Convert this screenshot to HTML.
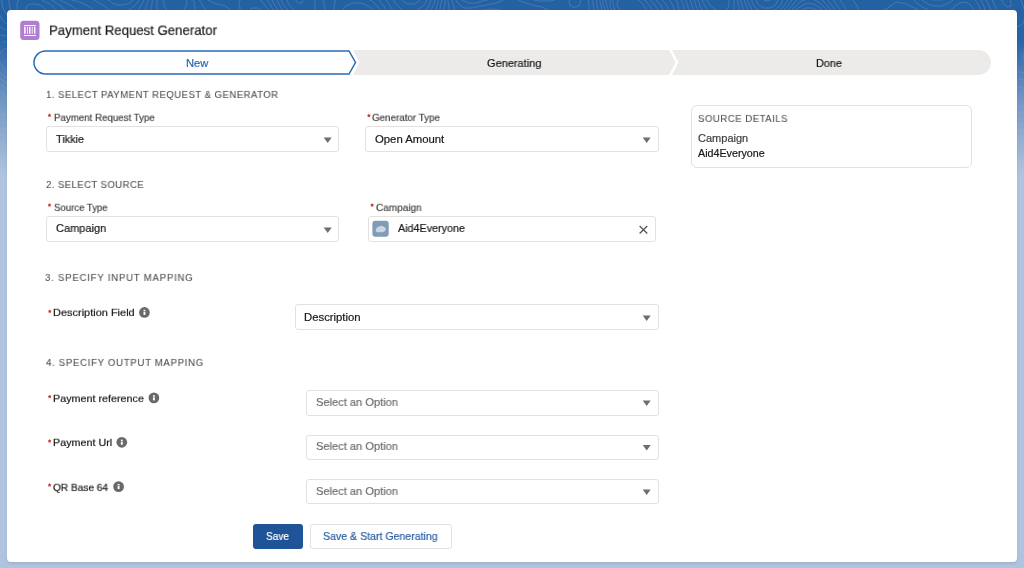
<!DOCTYPE html>
<html><head><meta charset="utf-8">
<style>
html,body{margin:0;padding:0;width:1024px;height:568px;overflow:hidden}
body{position:relative;font-family:"Liberation Sans",sans-serif;color:#181818;
background:linear-gradient(to bottom,#2461a3 0px,#2864a6 40px,#7196c4 100px,#b0c4df 175px,#b0c4df 568px);}
.t{position:absolute;white-space:nowrap;line-height:1;will-change:transform;-webkit-text-stroke:0.2px currentColor}
#card{position:absolute;left:7px;top:10px;width:1010px;height:552.3px;background:#fff;border-radius:4px;box-shadow:0 1.5px 2.5px rgba(0,0,0,.09)}
.box{position:absolute;border:1px solid #e2e1e0;border-radius:3px;background:#fff;box-sizing:border-box}
svg.i{position:absolute;overflow:visible}

</style></head><body>
<svg class="i" style="left:0;top:0" width="1024" height="200"><defs><linearGradient id="fadeg" x1="0" y1="0" x2="0" y2="1"><stop offset="0" stop-color="#fff" stop-opacity="1"/><stop offset="0.5" stop-color="#fff" stop-opacity="0.5"/><stop offset="1" stop-color="#fff" stop-opacity="0"/></linearGradient><mask id="fadem"><rect width="1024" height="200" fill="url(#fadeg)"/></mask></defs><g mask="url(#fadem)" fill="none" stroke="#fff" stroke-opacity="0.22" stroke-width="0.7"><path d="M805 36 L808 34 L810 32 L812 30 L812 28 L812 26 L810 23 L806 22 L802 24 L800 25 L798 27 L796 29 L794 32 L793 34 L794 37 L798 38 L802 37 L805 36"/><path d="M123 64 L122 62 L118 61 L118 64 L120 65 L123 64"/><path d="M794 144 L797 142 L798 140 L799 136 L799 132 L798 129 L796 126 L795 124 L793 122 L791 120 L788 118 L786 117 L782 116 L780 116 L776 116 L774 117 L772 118 L770 122 L770 124 L770 126 L771 130 L772 132 L774 136 L775 138 L777 140 L779 142 L782 144 L784 145 L788 146 L792 145 L794 144"/><path d="M791 46 L794 45 L797 44 L800 43 L803 42 L806 41 L808 40 L811 38 L814 36 L816 34 L817 32 L818 30 L819 26 L818 24 L816 20 L814 18 L812 17 L808 16 L804 17 L802 18 L799 20 L796 22 L794 24 L792 26 L790 28 L788 30 L786 32 L784 34 L782 36 L780 38 L778 40 L777 42 L776 44 L776 46 L780 47 L784 47 L788 47 L791 46"/><path d="M131 72 L132 70 L133 66 L132 62 L131 60 L130 58 L128 56 L124 54 L122 54 L118 53 L114 53 L110 53 L106 54 L104 55 L102 56 L101 60 L102 63 L104 65 L106 66 L109 68 L112 70 L114 70 L118 72 L120 72 L124 73 L128 73 L131 72"/><path d="M451 72 L454 70 L454 68 L454 65 L452 62 L450 61 L446 62 L445 64 L444 68 L446 71 L448 72 L451 72"/><path d="M793 150 L796 148 L798 147 L800 144 L801 142 L802 140 L803 136 L802 132 L802 130 L800 126 L799 124 L797 122 L796 120 L793 118 L790 116 L788 115 L786 114 L782 112 L780 112 L776 111 L772 112 L770 113 L768 115 L766 118 L766 120 L765 124 L766 127 L767 130 L768 133 L770 136 L771 138 L772 140 L774 142 L776 144 L778 146 L781 148 L784 150 L786 150 L790 151 L793 150"/><path d="M776 56 L778 55 L782 54 L784 54 L788 52 L790 51 L793 50 L796 49 L798 48 L802 46 L804 45 L807 44 L810 43 L812 42 L815 40 L818 38 L820 36 L821 34 L822 32 L823 28 L823 24 L822 22 L820 18 L818 16 L816 14 L814 13 L811 12 L808 12 L806 12 L802 14 L800 15 L798 16 L796 18 L793 20 L791 22 L789 24 L786 26 L784 28 L782 30 L780 31 L778 32 L776 34 L773 36 L770 38 L768 39 L766 40 L764 42 L762 44 L760 48 L761 52 L763 54 L766 55 L768 56 L772 56 L776 56"/><path d="M135 76 L137 74 L138 70 L138 68 L138 66 L137 62 L136 60 L134 56 L132 54 L130 52 L128 51 L125 50 L122 49 L118 49 L114 48 L110 48 L106 48 L102 49 L98 50 L96 50 L92 52 L90 54 L89 56 L89 60 L90 62 L92 64 L95 66 L98 68 L100 69 L103 70 L106 71 L108 72 L112 74 L114 75 L118 76 L120 77 L124 77 L128 78 L132 77 L135 76"/><path d="M455 80 L458 78 L459 76 L461 74 L462 70 L462 66 L461 62 L460 60 L458 57 L456 55 L454 53 L452 52 L448 51 L445 52 L442 54 L440 56 L439 58 L438 60 L437 64 L437 68 L437 72 L438 74 L440 77 L442 79 L444 80 L448 81 L452 81 L455 80"/><path d="M238 108 L242 107 L244 106 L247 104 L249 102 L250 100 L251 96 L250 94 L248 91 L246 90 L242 89 L240 90 L236 92 L234 93 L232 96 L231 98 L230 102 L232 106 L234 108 L236 108 L238 108"/><path d="M795 154 L798 152 L800 150 L802 148 L803 146 L804 144 L805 140 L806 136 L805 132 L804 128 L803 126 L802 123 L800 121 L798 119 L796 117 L794 115 L792 114 L789 112 L786 110 L784 109 L780 108 L778 107 L774 107 L770 108 L768 108 L766 110 L764 112 L762 115 L761 118 L761 122 L762 126 L762 128 L764 132 L765 134 L766 136 L768 140 L769 142 L771 144 L773 146 L774 148 L777 150 L780 152 L782 153 L784 154 L788 155 L792 155 L795 154"/><path d="M480 188 L484 186 L486 185 L488 182 L489 180 L490 176 L489 172 L488 170 L486 168 L482 166 L478 167 L475 168 L472 170 L470 172 L469 174 L468 176 L467 180 L468 184 L470 186 L472 188 L474 188 L478 188 L480 188"/><path d="M706 -4 L707 0 L708 2 L710 5 L712 7 L714 9 L716 10 L720 11 L724 11 L726 10 L728 8 L729 4 L729 0 L728 -2"/><path d="M773 62 L776 61 L780 60 L782 59 L785 58 L788 56 L790 56 L793 54 L796 53 L798 52 L801 50 L804 49 L806 48 L810 46 L812 45 L815 44 L818 42 L820 41 L822 39 L824 37 L826 34 L827 32 L827 28 L826 24 L826 22 L824 18 L823 16 L821 14 L819 12 L817 10 L814 9 L812 8 L808 8 L806 8 L802 10 L800 11 L798 12 L796 14 L793 16 L791 18 L789 20 L786 22 L784 24 L782 25 L780 27 L778 28 L775 30 L772 31 L770 32 L766 34 L764 35 L762 36 L758 38 L756 39 L754 41 L752 44 L752 46 L752 50 L752 52 L754 56 L756 58 L758 59 L760 60 L764 62 L766 62 L770 62 L773 62"/><path d="M138 80 L140 78 L141 76 L142 72 L142 68 L141 64 L140 61 L139 58 L138 56 L136 53 L134 51 L132 49 L130 48 L126 46 L124 46 L120 45 L116 45 L112 44 L108 44 L104 44 L100 44 L96 45 L92 46 L90 46 L86 48 L84 49 L82 50 L80 52 L78 54 L77 58 L78 62 L79 64 L82 66 L84 67 L86 68 L90 69 L92 70 L96 72 L98 72 L102 74 L104 74 L108 76 L110 77 L114 78 L116 79 L120 80 L122 80 L126 81 L130 82 L134 82 L138 80"/><path d="M453 86 L456 85 L458 84 L461 82 L463 80 L464 78 L466 74 L466 72 L467 68 L466 64 L465 62 L464 58 L463 56 L462 54 L460 51 L458 49 L456 47 L453 46 L450 45 L446 46 L444 46 L441 48 L438 50 L437 52 L435 54 L434 57 L433 60 L432 64 L432 66 L432 70 L432 73 L433 76 L434 78 L436 81 L438 83 L440 84 L444 86 L446 86 L450 87 L453 86"/><path d="M22 70 L25 68 L25 64 L24 62 L22 60 L20 58 L16 56 L12 56 L10 58 L9 62 L10 64 L12 66 L14 68 L18 70 L20 70 L22 70"/><path d="M239 114 L242 113 L245 112 L248 111 L250 110 L252 108 L254 106 L256 103 L257 100 L257 96 L256 92 L255 90 L254 88 L252 86 L248 84 L246 84 L244 84 L240 85 L237 86 L234 88 L232 89 L230 91 L228 93 L226 96 L225 98 L225 102 L225 106 L226 110 L227 112 L230 114 L232 114 L236 114 L239 114"/><path d="M796 158 L799 156 L802 154 L803 152 L805 150 L806 148 L808 144 L808 142 L809 138 L809 134 L808 131 L807 128 L806 125 L804 122 L803 120 L801 118 L799 116 L797 114 L794 112 L792 111 L790 109 L787 108 L784 106 L782 105 L778 104 L776 103 L772 103 L768 103 L766 104 L763 106 L761 108 L759 110 L758 113 L757 116 L757 120 L758 124 L758 126 L759 130 L760 132 L762 136 L763 138 L764 140 L766 143 L768 146 L770 148 L771 150 L773 152 L776 154 L778 156 L780 157 L782 158 L786 159 L790 159 L794 159 L796 158"/><path d="M46 160 L48 158 L47 154 L46 152 L44 150 L42 147 L40 145 L37 144 L34 144 L32 144 L29 146 L27 148 L27 152 L28 154 L30 156 L34 158 L36 159 L40 160 L42 160 L46 160"/><path d="M951 168 L954 167 L956 166 L958 164 L960 161 L961 158 L960 156 L958 152 L956 150 L954 149 L952 148 L948 147 L944 147 L942 149 L940 152 L940 154 L939 158 L940 162 L941 164 L942 166 L945 168 L948 168 L951 168"/><path d="M484 192 L488 190 L490 188 L492 186 L493 184 L494 180 L494 178 L494 174 L494 172 L493 168 L492 166 L490 164 L488 162 L484 161 L480 161 L477 162 L474 163 L472 165 L470 166 L468 168 L466 170 L464 172 L462 176 L462 178 L462 182 L462 184 L464 188 L465 190 L468 192 L470 193 L474 194 L478 194 L482 193 L484 192"/><path d="M726 194 L724 192 L722 190 L720 188 L718 187 L714 186 L712 186 L710 186 L708 188 L707 192"/><path d="M465 -4 L468 -2 L470 -2 L474 -2 L478 -2 L480 -2 L484 -3"/><path d="M701 -4 L702 -1 L703 2 L704 4 L706 8 L708 10 L710 12 L712 14 L714 15 L716 16 L720 17 L724 18 L728 17 L731 16 L733 14 L734 10 L734 8 L734 4 L734 2 L733 -2"/><path d="M776 66 L780 65 L782 64 L785 62 L788 60 L790 59 L792 58 L796 56 L798 55 L800 54 L804 52 L806 51 L808 50 L812 48 L814 48 L818 46 L820 45 L822 44 L825 42 L827 40 L829 38 L830 35 L831 32 L831 28 L830 24 L830 22 L828 18 L827 16 L825 14 L824 12 L822 10 L820 8 L817 6 L814 4 L812 4 L808 3 L805 4 L802 6 L800 7 L798 8 L796 10 L794 12 L792 14 L789 16 L787 18 L785 20 L782 22 L780 23 L778 25 L775 26 L772 28 L770 28 L766 30 L764 31 L760 32 L758 32 L754 34 L752 34 L749 36 L747 38 L746 40 L745 44 L745 48 L746 52 L746 54 L748 57 L750 60 L752 62 L754 63 L756 65 L759 66 L762 67 L766 68 L770 68 L774 67 L776 66"/><path d="M456 90 L458 89 L460 88 L463 86 L466 84 L467 82 L469 80 L470 77 L471 74 L471 70 L471 66 L470 63 L469 60 L468 57 L467 54 L466 52 L464 49 L462 47 L460 44 L458 43 L456 41 L452 40 L450 40 L448 40 L444 41 L442 42 L439 44 L437 46 L435 48 L433 50 L432 52 L430 56 L429 58 L428 62 L428 64 L427 68 L427 72 L428 76 L428 78 L430 82 L431 84 L432 86 L435 88 L438 90 L440 91 L444 91 L448 91 L452 91 L456 90"/><path d="M0 62 L2 66 L3 68 L5 70 L7 72 L10 74 L12 76 L14 77 L16 78 L20 80 L22 81 L25 82 L28 83 L32 84 L34 84 L38 85 L42 85 L44 84 L47 82 L49 80 L51 78 L52 76 L54 73 L56 71 L58 70 L62 70 L65 70 L68 70 L72 71 L76 71 L80 72 L82 72 L86 73 L90 74 L92 74 L96 75 L99 76 L102 77 L105 78 L108 79 L111 80 L114 81 L117 82 L120 83 L124 84 L126 85 L130 85 L134 86 L138 85 L140 84 L142 82 L144 78 L145 76 L145 72 L144 68 L144 65 L143 62 L142 58 L141 56 L140 53 L138 50 L136 48 L134 47 L132 45 L129 44 L126 43 L122 42 L120 42 L116 41 L112 41 L108 40 L104 40 L100 40 L96 40 L92 41 L88 41 L86 42 L82 43 L80 44 L76 46 L74 48 L72 49 L70 51 L68 53 L66 55 L64 57 L62 59 L60 62 L58 64 L56 66 L54 66 L51 66 L48 65 L46 64 L42 62 L40 61 L38 60 L35 58 L32 56 L30 55 L28 54 L25 52 L22 51 L20 50 L16 48 L14 48 L10 48 L7 48 L4 49 L2 51 L0 54"/><path d="M234 120 L236 120 L240 119 L244 118 L246 117 L250 116 L252 115 L255 114 L258 112 L260 110 L261 108 L262 105 L263 102 L263 98 L262 94 L261 92 L260 89 L259 86 L257 84 L255 82 L252 80 L250 80 L246 80 L243 80 L240 81 L237 82 L234 84 L232 85 L230 86 L228 88 L226 90 L224 93 L222 96 L221 98 L220 102 L220 106 L220 110 L221 114 L223 116 L224 118 L228 120 L230 120 L234 120"/><path d="M791 164 L794 164 L798 162 L800 161 L802 159 L804 157 L806 154 L807 152 L808 150 L810 146 L811 144 L811 140 L811 136 L811 132 L810 128 L809 126 L808 124 L806 120 L804 118 L802 116 L800 114 L798 112 L796 110 L794 109 L792 108 L789 106 L786 104 L784 103 L782 102 L778 100 L776 99 L772 99 L768 99 L764 100 L762 101 L760 102 L758 104 L756 107 L754 110 L754 112 L753 116 L753 120 L754 124 L754 126 L756 130 L757 132 L758 135 L759 138 L761 140 L762 143 L764 146 L765 148 L767 150 L768 152 L770 154 L772 156 L774 158 L777 160 L780 161 L782 162 L786 164 L789 164 L791 164"/><path d="M283 158 L286 156 L288 155 L290 153 L292 150 L292 148 L292 144 L292 140 L291 138 L290 134 L289 132 L287 130 L285 128 L282 127 L278 128 L276 128 L273 130 L272 132 L270 135 L269 138 L269 142 L269 146 L269 150 L270 153 L272 156 L274 158 L276 158 L280 159 L283 158"/><path d="M0 157 L4 157 L8 157 L12 158 L14 158 L18 160 L20 161 L22 162 L26 164 L28 164 L32 166 L34 167 L38 168 L40 169 L43 170 L46 171 L49 172 L52 173 L54 174 L58 176 L60 177 L63 178 L66 179 L70 180 L74 180 L78 180 L82 179 L84 178 L88 176 L90 175 L92 173 L94 170 L94 168 L94 165 L93 162 L91 160 L89 158 L86 157 L84 156 L80 155 L76 155 L72 155 L68 155 L65 154 L62 153 L60 152 L57 150 L55 148 L53 146 L51 144 L49 142 L48 140 L46 138 L44 136 L42 134 L38 133 L34 133 L31 134 L28 135 L26 136 L23 138 L20 140 L18 141 L16 142 L12 144 L10 144 L6 145 L3 144 L0 143"/><path d="M1038 142 L1036 141 L1034 140 L1030 138 L1028 138 L1024 137 L1020 137 L1017 138 L1015 140 L1013 142 L1012 144 L1011 148 L1011 152 L1012 155 L1014 157 L1016 158 L1020 159 L1024 159 L1028 159 L1032 159 L1035 158 L1038 157"/><path d="M953 174 L956 173 L958 172 L962 170 L964 169 L966 167 L968 164 L969 162 L968 158 L968 156 L966 153 L964 150 L962 148 L960 146 L958 145 L956 144 L953 142 L950 141 L946 140 L942 141 L939 142 L937 144 L936 146 L935 150 L934 153 L934 156 L934 160 L934 162 L935 166 L936 170 L937 172 L939 174 L942 175 L946 176 L950 175 L953 174"/><path d="M695 150 L697 148 L697 144 L694 143 L692 145 L692 148 L693 150 L695 150"/><path d="M654 158 L658 157 L660 154 L660 152 L659 150 L656 148 L654 147 L650 146 L646 147 L644 150 L646 154 L648 156 L650 157 L653 158 L654 158"/><path d="M490 194 L493 192 L495 190 L496 188 L498 184 L498 181 L498 178 L498 176 L497 172 L496 168 L496 166 L494 162 L493 160 L491 158 L488 156 L486 156 L483 156 L480 157 L476 158 L474 159 L472 160 L469 162 L466 164 L464 166 L462 168 L461 170 L459 172 L458 176 L458 178 L458 182 L458 184 L459 188 L460 190 L462 193"/><path d="M731 194 L730 192 L728 190 L726 187 L724 186 L722 184 L719 182 L716 180 L714 179 L710 178 L708 178 L705 178 L703 180 L702 182 L701 186 L701 190 L701 194"/><path d="M115 -4 L118 -2 L120 -2 L124 -2 L126 -3 L129 -4"/><path d="M459 -4 L460 -2 L462 0 L466 2 L468 3 L472 3 L476 3 L479 2 L482 1 L486 0 L488 -0 L492 -2 L494 -2 L496 -4"/><path d="M697 -4 L698 -0 L699 2 L700 6 L701 8 L702 10 L704 12 L706 14 L708 16 L711 18 L714 20 L716 21 L719 22 L722 23 L725 24 L728 25 L732 25 L736 26 L739 24 L739 20 L739 16 L739 12 L739 8 L738 4 L738 2 L737 -2"/><path d="M1000 -4 L1001 -2 L1002 1 L1004 4 L1006 6 L1008 7 L1011 6 L1011 2 L1010 -1 L1009 -4"/><path d="M774 72 L778 70 L780 69 L782 68 L785 66 L788 64 L790 63 L792 62 L795 60 L798 58 L800 57 L802 56 L806 54 L808 53 L811 52 L814 51 L816 50 L820 48 L822 47 L825 46 L828 44 L830 43 L832 40 L833 38 L834 36 L835 32 L835 28 L834 25 L833 22 L832 19 L830 16 L829 14 L828 12 L826 9 L824 7 L822 5 L820 3 L818 2 L815 0 L812 -1 L808 -1 L804 -0 L802 1 L800 2 L798 4 L796 6 L794 8 L792 10 L790 12 L788 14 L785 16 L783 18 L780 20 L778 21 L776 22 L773 24 L770 25 L767 26 L764 27 L760 27 L756 28 L752 28 L748 28 L744 28 L741 28 L740 30 L739 34 L739 38 L739 42 L739 46 L740 50 L740 52 L742 56 L743 58 L744 60 L746 62 L748 64 L750 66 L752 68 L755 70 L758 71 L760 72 L764 74 L768 74 L772 73 L774 72"/><path d="M450 96 L452 96 L456 94 L458 94 L462 92 L464 91 L466 89 L468 87 L470 85 L472 83 L474 80 L474 78 L475 74 L475 70 L475 66 L474 63 L473 60 L472 57 L471 54 L470 52 L468 48 L467 46 L465 44 L464 42 L462 40 L460 38 L457 36 L454 35 L450 35 L446 36 L444 36 L441 38 L438 40 L436 41 L434 43 L432 46 L430 48 L429 50 L428 52 L426 56 L426 58 L425 62 L424 65 L423 68 L423 72 L423 76 L423 80 L424 84 L424 86 L426 89 L428 92 L430 93 L432 94 L436 96 L438 96 L442 96 L446 96 L450 96"/><path d="M131 194 L132 192 L133 188 L133 184 L132 181 L130 179 L128 177 L126 176 L122 174 L120 174 L116 173 L114 172 L110 170 L108 168 L106 166 L105 164 L104 162 L102 159 L100 157 L98 155 L96 153 L94 152 L90 150 L88 150 L84 149 L80 149 L76 149 L72 149 L69 148 L66 147 L63 146 L60 144 L58 142 L56 140 L55 138 L54 136 L52 133 L51 130 L50 128 L48 124 L48 122 L47 118 L47 114 L48 111 L50 108 L51 106 L52 104 L54 101 L55 98 L56 96 L58 93 L59 90 L61 88 L62 86 L64 84 L66 82 L69 80 L72 79 L74 78 L78 77 L82 77 L86 77 L90 77 L94 78 L96 78 L100 79 L102 80 L106 81 L109 82 L112 83 L115 84 L118 85 L121 86 L124 87 L127 88 L130 89 L134 89 L138 90 L142 88 L144 87 L146 84 L147 82 L148 78 L148 74 L147 70 L147 66 L146 62 L145 60 L144 56 L144 54 L142 51 L140 48 L139 46 L136 44 L134 42 L132 41 L129 40 L126 39 L122 38 L120 38 L116 37 L112 37 L108 37 L104 36 L100 36 L96 36 L92 36 L88 37 L84 38 L82 38 L78 40 L76 41 L73 42 L70 44 L68 45 L66 46 L62 48 L60 49 L58 50 L54 52 L52 53 L48 53 L44 53 L40 52 L38 52 L34 50 L32 49 L29 48 L26 47 L24 46 L20 44 L18 44 L14 43 L11 42 L8 42 L4 42 L2 42"/><path d="M1038 44 L1036 46 L1034 49 L1033 52 L1032 56 L1032 60 L1034 64 L1035 66 L1036 68 L1038 70"/><path d="M0 72 L2 74 L4 76 L7 78 L9 80 L12 82 L14 83 L16 85 L18 86 L21 88 L24 90 L26 91 L28 93 L30 94 L32 96 L34 98 L36 100 L38 103 L40 106 L41 108 L42 112 L41 116 L39 118 L37 120 L34 122 L32 124 L30 125 L28 127 L26 128 L23 130 L20 132 L18 133 L16 134 L12 135 L8 136 L4 136 L0 135"/><path d="M280 164 L282 163 L286 162 L288 161 L290 160 L293 158 L295 156 L297 154 L298 152 L300 148 L300 144 L300 140 L299 136 L299 132 L300 128 L300 126 L302 123 L304 120 L305 118 L306 116 L307 112 L307 108 L305 106 L302 104 L299 104 L297 104 L294 105 L290 106 L288 107 L285 108 L282 109 L278 110 L274 108 L272 106 L271 104 L270 101 L269 98 L268 96 L266 92 L266 90 L264 87 L262 84 L261 82 L259 80 L257 78 L254 76 L252 76 L248 75 L244 76 L242 77 L239 78 L236 79 L234 80 L231 82 L228 84 L226 86 L224 88 L222 90 L221 92 L220 94 L218 98 L217 100 L217 104 L216 108 L216 112 L217 116 L218 120 L219 122 L221 124 L224 126 L228 126 L232 125 L236 125 L240 124 L242 124 L246 123 L250 122 L254 122 L258 123 L260 125 L262 128 L262 130 L262 134 L263 138 L263 142 L263 146 L264 150 L264 152 L266 156 L266 158 L268 160 L270 162 L274 164 L276 164 L280 164"/><path d="M797 168 L800 166 L802 165 L804 163 L806 160 L808 158 L809 156 L810 154 L812 150 L812 148 L813 144 L814 140 L814 136 L813 132 L813 128 L812 126 L810 122 L809 120 L807 118 L806 116 L804 114 L802 112 L799 110 L797 108 L794 106 L792 105 L790 103 L788 102 L785 100 L782 98 L780 97 L778 96 L774 94 L772 94 L768 93 L764 94 L762 95 L760 96 L758 98 L756 100 L754 102 L752 105 L750 108 L749 110 L748 114 L748 118 L749 122 L750 126 L751 128 L752 130 L754 134 L755 136 L756 139 L758 142 L759 144 L760 146 L762 150 L764 152 L765 154 L767 156 L768 158 L771 160 L773 162 L776 164 L778 165 L780 166 L784 168 L786 168 L790 169 L794 169 L797 168"/><path d="M735 194 L734 192 L732 189 L730 186 L728 184 L726 182 L724 181 L722 179 L720 178 L718 176 L715 174 L713 172 L711 170 L709 168 L708 166 L707 162 L707 158 L707 154 L707 150 L708 146 L708 144 L708 140 L708 137 L707 134 L706 132 L704 130 L700 128 L698 128 L695 128 L692 129 L690 130 L687 132 L684 134 L682 136 L680 138 L678 139 L676 140 L672 142 L668 142 L664 141 L661 140 L658 139 L654 138 L652 137 L648 136 L646 136 L642 135 L638 134 L634 135 L632 136 L630 140 L631 144 L632 147 L633 150 L634 152 L636 154 L638 157 L640 159 L642 161 L644 162 L647 164 L650 165 L654 166 L656 166 L658 166 L662 165 L666 164 L668 163 L672 162 L674 162 L678 161 L680 162 L684 163 L686 165 L688 166 L690 168 L692 170 L694 174 L694 176 L695 180 L696 184 L696 188 L696 190 L697 194"/><path d="M1038 134 L1036 133 L1032 132 L1030 131 L1026 130 L1024 130 L1020 130 L1018 130 L1014 132 L1012 133 L1010 135 L1008 137 L1006 140 L1005 142 L1004 146 L1003 148 L1002 152 L1002 154 L1001 158 L1000 161 L999 164 L998 166 L996 169 L994 171 L993 174 L993 178 L994 181 L995 184 L996 186 L997 190 L998 192"/><path d="M944 182 L948 181 L951 180 L954 179 L956 178 L960 177 L962 176 L966 174 L968 174 L972 172 L974 172 L977 170 L979 168 L980 164 L978 161 L976 158 L975 156 L973 154 L972 152 L970 150 L968 148 L966 146 L964 144 L961 142 L958 140 L956 139 L954 138 L950 136 L948 135 L944 135 L940 135 L937 136 L934 138 L933 140 L932 142 L931 146 L930 149 L930 152 L930 156 L930 160 L930 164 L930 166 L931 170 L932 174 L933 176 L934 179 L936 181 L939 182 L942 182 L944 182"/><path d="M499 194 L500 192 L501 188 L502 184 L502 180 L501 176 L501 172 L500 169 L499 166 L498 162 L497 160 L496 158 L494 155 L492 153 L490 152 L486 151 L482 152 L480 152 L476 154 L474 155 L472 156 L469 158 L466 160 L464 161 L462 163 L460 165 L458 167 L456 170 L455 172 L454 176 L454 180 L454 184 L455 188 L456 190 L458 194"/><path d="M0 165 L4 165 L8 165 L12 165 L15 166 L18 167 L22 168 L24 169 L28 170 L30 171 L34 172 L36 173 L39 174 L42 175 L44 176 L48 178 L50 178 L53 180 L56 181 L58 182 L62 183 L64 184 L68 185 L72 186 L76 186 L78 186 L80 186 L84 186 L88 185 L92 184 L95 184 L98 184 L100 184 L104 186 L106 188 L108 190 L110 192 L112 194"/><path d="M1008 194 L1006 190 L1006 188 L1005 184 L1004 181 L1004 178 L1004 176 L1006 172 L1008 171 L1010 170 L1014 169 L1017 168 L1020 167 L1024 167 L1027 166 L1030 166 L1034 165 L1038 165"/><path d="M103 -4 L105 -2 L108 0 L110 1 L112 3 L115 4 L118 5 L122 5 L126 4 L128 4 L131 2 L133 0 L135 -2 L136 -4"/><path d="M454 -4 L456 -0 L457 2 L459 4 L461 6 L464 8 L466 8 L470 8 L472 8 L476 7 L480 6 L482 6 L486 5 L490 4 L492 4 L496 3 L499 2 L502 1 L504 -1 L505 -4"/><path d="M693 -4 L694 -0 L695 2 L696 6 L697 8 L698 10 L700 14 L702 16 L704 18 L706 20 L708 21 L710 23 L712 24 L716 26 L718 27 L720 28 L724 30 L726 31 L728 33 L730 35 L732 38 L732 40 L733 44 L734 46 L735 50 L736 53 L737 56 L738 58 L740 61 L742 64 L744 66 L745 68 L747 70 L750 72 L752 74 L754 76 L756 78 L758 80 L760 82 L760 84 L760 86 L758 89 L756 92 L754 94 L752 96 L751 98 L749 100 L748 102 L746 105 L745 108 L744 110 L743 114 L743 118 L744 122 L745 124 L746 127 L747 130 L748 132 L750 135 L752 138 L753 140 L754 143 L756 146 L757 148 L758 150 L760 154 L761 156 L763 158 L765 160 L766 162 L769 164 L771 166 L774 168 L776 169 L778 170 L782 172 L784 173 L788 174 L790 175 L794 175 L798 175 L800 174 L803 172 L804 170 L806 168 L808 165 L810 162 L811 160 L812 157 L813 154 L814 152 L815 148 L816 144 L816 142 L816 138 L816 134 L816 132 L815 128 L814 125 L813 122 L812 120 L810 117 L808 115 L806 113 L804 111 L802 109 L800 107 L798 106 L795 104 L793 102 L790 100 L788 99 L786 97 L784 95 L782 94 L780 92 L778 90 L776 88 L774 85 L774 82 L775 80 L777 78 L779 76 L781 74 L783 72 L786 70 L788 68 L790 67 L792 65 L794 64 L797 62 L800 60 L802 59 L804 58 L808 56 L810 55 L813 54 L816 53 L818 52 L822 51 L824 50 L828 49 L830 48 L833 46 L835 44 L836 42 L838 38 L839 36 L839 32 L838 28 L838 26 L837 22 L836 20 L834 16 L833 14 L832 12 L830 9 L828 6 L826 4 L824 2 L822 0 L820 -2 L818 -3"/><path d="M800 -4 L798 -2 L797 0 L795 2 L793 4 L792 6 L790 8 L788 10 L786 12 L784 14 L781 16 L778 18 L776 19 L774 20 L770 22 L768 22 L764 23 L760 23 L756 23 L752 22 L750 21 L748 20 L746 17 L745 14 L744 12 L743 8 L742 5 L741 2 L740 -2 L740 -4"/><path d="M990 -4 L992 -1 L993 2 L994 4 L996 8 L997 10 L998 12 L1000 16 L1001 18 L1003 20 L1004 22 L1007 24 L1010 26 L1012 26 L1016 27 L1019 26 L1022 24 L1024 22 L1024 20 L1025 16 L1025 12 L1024 9 L1023 6 L1022 3 L1021 0 L1020 -2"/><path d="M533 26 L536 25 L538 22 L538 20 L538 18 L536 16 L533 14 L530 13 L526 13 L523 14 L522 18 L524 21 L526 24 L528 25 L531 26 L533 26"/><path d="M271 40 L273 38 L274 36 L274 32 L273 30 L272 28 L270 26 L268 24 L265 22 L262 21 L258 22 L257 24 L257 28 L258 32 L259 34 L260 37 L262 39 L264 40 L268 41 L271 40"/><path d="M443 102 L446 102 L450 101 L453 100 L456 99 L458 98 L462 96 L464 95 L466 94 L469 92 L471 90 L474 88 L475 86 L477 84 L478 82 L480 78 L480 76 L480 72 L480 70 L479 66 L478 62 L477 60 L476 56 L475 54 L474 51 L473 48 L472 46 L470 43 L468 40 L467 38 L465 36 L463 34 L461 32 L458 30 L456 29 L452 29 L448 30 L446 31 L443 32 L440 34 L438 35 L436 37 L434 38 L432 40 L430 43 L428 45 L426 48 L425 50 L424 53 L423 56 L422 59 L421 62 L420 66 L420 68 L419 72 L418 76 L418 78 L417 82 L417 86 L416 90 L416 92 L416 96 L415 100 L416 102 L420 103 L424 103 L428 103 L432 103 L436 103 L440 102 L443 102"/><path d="M137 194 L138 191 L139 188 L139 184 L138 180 L137 178 L136 176 L134 174 L132 172 L128 170 L126 169 L124 168 L120 166 L118 165 L116 164 L114 162 L112 160 L110 158 L108 156 L106 154 L104 152 L102 150 L99 148 L96 147 L94 146 L90 145 L86 144 L82 144 L80 144 L76 144 L72 143 L69 142 L66 141 L64 139 L62 137 L60 134 L59 132 L58 130 L57 126 L57 122 L57 118 L58 115 L59 112 L60 108 L60 106 L62 102 L62 100 L64 96 L65 94 L66 92 L68 89 L70 87 L72 85 L74 84 L78 82 L80 82 L84 81 L88 81 L92 81 L96 81 L99 82 L102 83 L106 84 L108 84 L112 86 L114 86 L118 88 L120 89 L124 90 L126 91 L130 92 L132 93 L136 94 L140 94 L144 93 L146 92 L148 90 L150 86 L150 84 L151 80 L150 76 L150 72 L150 70 L149 66 L148 62 L148 60 L147 56 L146 53 L145 50 L144 48 L142 45 L140 42 L138 40 L136 39 L134 38 L130 36 L128 36 L124 35 L121 34 L118 33 L114 33 L110 32 L106 32 L104 32 L100 32 L96 32 L92 32 L90 32 L86 33 L82 34 L80 34 L76 36 L74 36 L71 38 L68 39 L66 40 L63 42 L60 43 L58 44 L54 46 L52 46 L48 47 L44 47 L40 47 L37 46 L34 45 L31 44 L28 43 L25 42 L22 41 L20 40 L16 39 L14 38 L10 37 L6 36 L4 36 L0 35"/><path d="M1038 35 L1035 36 L1032 37 L1030 39 L1028 42 L1027 44 L1026 46 L1024 50 L1023 52 L1023 56 L1023 60 L1024 62 L1026 65 L1028 67 L1030 69 L1032 71 L1034 73 L1036 75 L1038 77"/><path d="M998 70 L1002 69 L1004 68 L1006 66 L1008 62 L1008 60 L1008 58 L1006 55 L1004 53 L1002 52 L998 51 L994 51 L992 52 L989 54 L987 56 L986 58 L985 62 L986 65 L988 67 L990 69 L994 70 L996 70 L998 70"/><path d="M280 168 L284 167 L287 166 L290 165 L292 164 L296 162 L298 161 L300 159 L302 157 L304 155 L306 152 L306 150 L307 146 L307 142 L306 138 L307 134 L307 130 L308 128 L310 124 L311 122 L312 120 L314 116 L314 114 L314 110 L314 108 L312 104 L310 102 L308 101 L306 100 L302 99 L298 98 L294 98 L290 99 L286 99 L282 99 L278 98 L276 97 L274 95 L272 92 L271 90 L269 88 L268 86 L266 82 L265 80 L263 78 L262 76 L260 74 L257 72 L254 71 L250 71 L246 72 L244 72 L240 74 L238 75 L236 76 L232 78 L230 79 L228 81 L226 82 L224 84 L222 86 L220 88 L218 91 L216 94 L215 96 L214 100 L214 102 L213 106 L213 110 L212 114 L212 118 L212 122 L212 126 L212 130 L214 133 L218 134 L222 133 L226 132 L228 132 L232 131 L236 130 L238 130 L242 129 L246 129 L250 130 L252 131 L254 132 L256 136 L257 138 L258 142 L258 144 L259 148 L260 152 L260 154 L261 158 L262 160 L264 163 L266 166 L268 167 L270 168 L274 169 L278 168 L280 168"/><path d="M0 78 L2 80 L5 82 L7 84 L10 86 L12 88 L14 90 L16 91 L18 93 L20 95 L22 97 L24 99 L26 102 L27 104 L28 107 L28 110 L28 114 L27 116 L26 118 L24 121 L22 123 L20 124 L18 126 L14 128 L12 128 L8 129 L4 129 L0 128"/><path d="M523 110 L525 108 L526 106 L527 102 L527 98 L526 94 L526 92 L524 88 L522 86 L520 85 L518 84 L514 83 L510 84 L508 85 L506 88 L505 90 L505 94 L506 98 L507 100 L508 103 L509 106 L511 108 L513 110 L516 112 L520 112 L523 110"/><path d="M398 118 L401 116 L404 114 L405 112 L406 110 L405 108 L402 108 L398 108 L396 109 L394 110 L392 114 L392 116 L393 118 L396 118 L398 118"/><path d="M739 194 L738 192 L736 188 L734 186 L733 184 L731 182 L729 180 L726 178 L724 176 L722 174 L720 172 L718 170 L716 168 L715 166 L714 164 L713 160 L713 156 L713 152 L713 148 L714 144 L714 142 L714 138 L714 134 L714 132 L713 128 L711 126 L709 124 L706 122 L704 122 L700 121 L696 121 L692 121 L689 122 L686 123 L684 124 L682 126 L679 128 L676 130 L674 131 L671 132 L668 133 L664 133 L660 132 L658 132 L654 131 L652 130 L648 128 L646 128 L642 126 L640 125 L638 124 L634 122 L632 121 L629 120 L626 119 L622 119 L620 120 L618 122 L617 126 L617 130 L618 134 L618 136 L620 140 L621 142 L622 145 L624 148 L625 150 L627 152 L629 154 L630 156 L632 158 L634 160 L636 162 L638 164 L641 166 L644 168 L646 169 L650 170 L652 171 L656 171 L660 171 L664 171 L667 170 L670 170 L674 169 L678 170 L680 171 L683 172 L685 174 L687 176 L688 178 L690 182 L690 184 L691 188 L692 191 L693 194"/><path d="M1038 128 L1034 127 L1032 126 L1028 125 L1024 124 L1022 124 L1019 124 L1016 125 L1013 126 L1010 128 L1008 129 L1006 132 L1004 134 L1003 136 L1002 138 L1000 141 L998 144 L997 146 L996 148 L994 150 L992 152 L988 154 L984 153 L981 152 L978 150 L976 149 L974 147 L972 146 L970 144 L967 142 L964 140 L962 138 L960 137 L958 136 L955 134 L952 132 L950 131 L946 130 L944 129 L940 129 L936 130 L934 130 L931 132 L930 134 L928 137 L927 140 L926 144 L926 148 L926 150 L926 154 L926 158 L926 160 L926 164 L926 168 L927 172 L927 176 L928 179 L929 182 L930 184 L932 186 L935 188 L938 189 L942 188 L944 188 L948 186 L950 185 L953 184 L956 183 L958 182 L962 181 L965 180 L968 180 L972 179 L976 180 L978 181 L980 182 L983 184 L984 186 L986 188 L988 191 L989 194"/><path d="M204 166 L206 162 L206 160 L207 156 L207 152 L207 148 L207 144 L206 142 L202 141 L198 141 L194 141 L190 142 L188 143 L186 144 L184 146 L183 150 L184 154 L185 156 L187 158 L188 160 L191 162 L193 164 L196 166 L198 167 L202 168 L204 166"/><path d="M506 194 L506 190 L506 186 L505 182 L505 178 L504 175 L503 172 L503 168 L502 165 L501 162 L500 158 L499 156 L498 154 L496 151 L494 149 L492 147 L488 147 L484 147 L481 148 L478 149 L476 150 L472 152 L470 153 L468 155 L466 156 L463 158 L460 160 L458 162 L456 164 L454 166 L453 168 L452 170 L451 174 L451 178 L451 182 L452 186 L452 188 L453 192"/><path d="M0 170 L4 170 L8 170 L12 171 L16 172 L18 172 L22 173 L26 174 L28 175 L32 176 L34 177 L38 178 L40 179 L43 180 L46 181 L48 182 L52 184 L54 185 L57 186 L60 187 L62 188 L66 189 L69 190 L72 191 L76 191 L80 191 L84 191 L88 192 L92 192 L94 192 L98 193"/><path d="M1018 194 L1018 192 L1017 188 L1016 184 L1017 180 L1018 178 L1020 176 L1023 174 L1026 173 L1028 172 L1032 171 L1036 170"/><path d="M813 194 L810 193 L806 193 L803 194"/><path d="M77 -4 L80 -3 L84 -3 L88 -2 L90 -2 L94 -0 L96 1 L98 2 L101 4 L104 6 L106 7 L108 9 L110 10 L114 12 L116 12 L120 13 L124 12 L126 11 L129 10 L132 8 L134 6 L136 4 L138 2 L139 0 L140 -2"/><path d="M451 -4 L452 0 L452 2 L454 6 L454 8 L455 12 L456 16 L454 19 L452 21 L450 22 L448 24 L445 26 L442 28 L440 29 L438 31 L436 32 L434 34 L431 36 L430 38 L428 40 L426 42 L424 46 L423 48 L422 50 L420 54 L419 56 L418 60 L417 62 L416 66 L416 68 L414 72 L414 74 L412 78 L411 80 L410 82 L408 85 L406 87 L404 89 L401 90 L398 91 L394 92 L392 92 L388 93 L386 94 L383 96 L382 98 L380 101 L379 104 L379 108 L378 112 L378 114 L378 118 L378 121 L378 124 L379 128 L380 130 L382 133 L384 134 L388 135 L392 134 L394 134 L398 132 L400 131 L402 130 L405 128 L408 126 L410 125 L412 123 L414 122 L417 120 L420 118 L422 117 L424 116 L427 114 L430 113 L432 112 L436 110 L438 110 L442 108 L444 108 L448 107 L450 106 L454 105 L456 104 L460 102 L462 101 L464 100 L467 98 L470 96 L472 95 L474 93 L476 92 L479 90 L481 88 L484 86 L486 84 L488 82 L488 80 L488 76 L487 74 L486 70 L485 68 L484 65 L483 62 L482 60 L481 56 L480 54 L478 50 L477 48 L476 45 L474 42 L473 40 L472 37 L470 34 L469 32 L468 30 L466 26 L465 24 L465 20 L466 18 L468 16 L472 14 L474 13 L477 12 L480 11 L484 10 L486 10 L490 9 L494 9 L498 10 L500 10 L504 12 L506 14 L508 16 L509 18 L510 20 L512 22 L514 25 L516 28 L518 30 L520 31 L522 33 L524 34 L528 36 L530 37 L534 37 L538 37 L540 36 L543 34 L545 32 L546 30 L548 27 L549 24 L550 22 L551 18 L551 14 L550 12 L548 10 L544 8 L542 7 L538 6 L536 6 L532 5 L529 4 L526 3 L523 2 L520 1 L518 -0 L516 -2 L514 -4"/><path d="M571 -4 L570 -2 L569 2 L570 5 L572 7 L576 7 L579 6 L580 4 L581 0 L581 -4"/><path d="M689 -4 L690 -0 L691 2 L692 6 L693 8 L694 12 L695 14 L696 16 L698 18 L700 21 L702 22 L704 24 L707 26 L710 28 L712 29 L714 30 L717 32 L720 34 L722 35 L724 37 L726 40 L727 42 L728 44 L730 48 L730 50 L732 54 L733 56 L734 59 L736 62 L737 64 L738 66 L740 68 L742 71 L744 73 L746 76 L748 78 L749 80 L750 82 L750 86 L750 88 L748 92 L747 94 L746 96 L744 99 L742 102 L741 104 L740 106 L738 109 L737 112 L736 116 L736 118 L736 120 L738 124 L739 126 L740 128 L742 131 L744 134 L745 136 L747 138 L748 140 L750 144 L751 146 L752 148 L754 152 L755 154 L756 156 L758 159 L760 162 L762 164 L764 166 L766 168 L768 169 L770 170 L773 172 L776 173 L778 174 L781 176 L784 178 L786 179 L788 180 L791 182 L793 184 L795 186 L796 190 L795 194"/><path d="M794 -4 L792 -0 L791 2 L789 4 L788 6 L786 8 L784 10 L782 12 L780 14 L776 16 L774 17 L772 18 L768 19 L764 20 L760 20 L756 19 L754 18 L752 16 L750 14 L748 11 L747 8 L746 6 L745 2 L744 -1 L743 -4"/><path d="M822 194 L820 192 L817 190 L815 188 L813 186 L811 184 L810 182 L809 178 L810 174 L810 172 L812 168 L812 166 L814 162 L815 160 L816 156 L817 154 L818 150 L818 148 L819 144 L819 140 L819 136 L819 132 L818 129 L817 126 L816 123 L815 120 L814 118 L812 115 L810 113 L808 111 L806 109 L804 107 L802 106 L800 104 L797 102 L794 100 L792 98 L790 96 L788 94 L786 92 L784 90 L783 88 L782 84 L783 80 L784 78 L786 75 L788 73 L790 71 L792 69 L794 68 L797 66 L799 64 L802 62 L804 61 L806 60 L810 58 L812 57 L816 56 L818 55 L822 54 L824 54 L828 53 L831 52 L834 51 L836 50 L839 48 L840 46 L842 42 L842 40 L843 36 L843 32 L842 28 L842 26 L841 22 L840 20 L838 16 L837 14 L836 12 L834 8 L832 6 L831 4 L829 2 L828 0 L826 -2 L824 -4"/><path d="M984 -4 L986 -1 L987 2 L988 4 L990 8 L991 10 L992 14 L993 16 L994 20 L995 22 L996 26 L996 28 L997 32 L996 35 L995 38 L993 40 L991 42 L988 44 L986 46 L984 48 L982 50 L980 52 L978 54 L977 56 L976 59 L976 62 L976 64 L978 68 L980 70 L982 72 L984 73 L986 74 L990 75 L992 76 L996 76 L1000 76 L1002 76 L1006 75 L1009 74 L1012 73 L1016 72 L1018 72 L1020 72 L1024 73 L1026 74 L1029 76 L1032 78 L1034 79 L1036 81 L1038 82"/><path d="M1038 25 L1036 22 L1035 20 L1034 18 L1033 14 L1032 11 L1031 8 L1030 5 L1029 2 L1028 -0 L1027 -4"/><path d="M270 50 L272 49 L274 48 L276 46 L279 44 L280 42 L282 38 L282 36 L282 33 L281 30 L280 28 L278 26 L276 24 L274 22 L272 20 L270 18 L268 16 L266 14 L263 12 L261 10 L258 8 L256 8 L252 8 L250 10 L249 12 L248 16 L248 20 L249 24 L250 28 L250 30 L251 34 L252 36 L254 40 L255 42 L256 45 L258 48 L260 50 L262 51 L266 51 L270 50"/><path d="M142 194 L142 192 L143 188 L143 184 L143 180 L142 176 L141 174 L140 172 L138 170 L135 168 L132 166 L130 165 L128 164 L125 162 L122 160 L120 159 L118 158 L116 156 L114 154 L112 152 L110 150 L108 148 L105 146 L102 144 L100 143 L97 142 L94 141 L90 140 L88 140 L84 140 L80 139 L76 138 L74 138 L70 136 L68 134 L66 132 L65 130 L64 127 L63 124 L63 120 L64 116 L64 114 L65 110 L66 106 L66 104 L68 100 L69 98 L70 95 L72 92 L74 90 L76 88 L78 87 L80 86 L84 85 L88 84 L90 84 L92 84 L96 84 L100 85 L104 86 L106 87 L110 88 L112 88 L116 90 L118 91 L121 92 L124 93 L126 94 L130 96 L132 97 L136 98 L138 99 L142 99 L146 99 L148 98 L150 96 L152 92 L153 90 L153 86 L153 82 L153 78 L153 74 L152 70 L152 68 L151 64 L150 60 L150 58 L149 54 L148 50 L148 48 L146 44 L145 42 L144 40 L142 38 L139 36 L136 34 L134 33 L132 32 L128 30 L126 30 L122 29 L119 28 L116 27 L112 27 L108 26 L104 26 L100 26 L96 26 L92 27 L88 27 L85 28 L82 29 L78 30 L76 31 L73 32 L70 34 L68 35 L65 36 L62 37 L60 38 L56 40 L54 41 L50 42 L48 42 L44 42 L40 42 L38 42 L34 41 L31 40 L28 39 L25 38 L22 37 L20 36 L16 34 L14 33 L10 32 L8 31 L6 30 L2 28 L0 27"/><path d="M941 76 L944 74 L946 72 L948 70 L950 68 L951 66 L952 64 L953 60 L953 56 L952 54 L950 52 L948 50 L944 48 L942 48 L939 48 L936 49 L933 50 L930 52 L928 53 L926 55 L924 58 L923 60 L922 64 L923 68 L924 71 L926 74 L928 75 L930 76 L934 77 L938 77 L941 76"/><path d="M211 182 L213 180 L214 178 L215 174 L215 170 L214 166 L214 162 L214 158 L215 154 L216 150 L217 148 L218 146 L220 144 L222 142 L225 140 L228 138 L230 137 L234 136 L236 135 L240 135 L244 135 L247 136 L250 138 L251 140 L252 142 L254 146 L255 148 L256 152 L256 154 L257 158 L258 161 L259 164 L260 167 L262 170 L264 172 L266 173 L270 173 L274 173 L278 172 L280 172 L284 171 L286 170 L290 168 L292 168 L296 166 L298 165 L301 164 L304 163 L306 162 L309 160 L311 158 L312 156 L313 152 L314 148 L313 144 L313 140 L313 136 L314 132 L314 130 L315 126 L316 124 L318 120 L318 118 L319 114 L319 110 L318 106 L317 104 L316 102 L314 100 L311 98 L308 96 L306 96 L302 95 L298 94 L294 94 L290 94 L287 94 L284 94 L280 92 L278 91 L276 89 L274 87 L272 84 L271 82 L269 80 L268 78 L266 74 L265 72 L263 70 L262 68 L260 66 L256 64 L252 65 L249 66 L246 67 L244 68 L241 70 L238 72 L236 73 L234 74 L230 76 L228 78 L226 79 L224 80 L222 82 L220 84 L218 86 L216 89 L214 92 L213 94 L212 97 L211 100 L210 104 L210 106 L209 110 L209 114 L208 117 L207 120 L206 124 L205 126 L203 128 L201 130 L198 132 L196 133 L192 134 L190 134 L186 135 L183 136 L180 137 L178 138 L175 140 L174 142 L173 146 L173 150 L174 153 L176 156 L177 158 L179 160 L181 162 L183 164 L185 166 L188 168 L190 170 L192 172 L194 173 L196 175 L198 176 L200 178 L203 180 L206 182 L208 182 L211 182"/><path d="M522 118 L525 116 L527 114 L529 112 L530 110 L532 106 L532 103 L532 100 L532 98 L531 94 L530 90 L530 88 L528 84 L526 82 L525 80 L522 78 L520 77 L518 76 L514 75 L510 75 L507 76 L504 77 L502 78 L498 80 L496 82 L496 84 L496 88 L497 90 L498 94 L499 96 L500 99 L501 102 L502 104 L504 108 L505 110 L506 112 L508 115 L510 117 L512 118 L516 119 L520 119 L522 118"/><path d="M0 84 L2 85 L4 87 L6 89 L8 91 L10 93 L12 95 L14 97 L16 100 L18 102 L19 104 L20 108 L20 112 L18 116 L16 118 L14 120 L12 121 L10 122 L6 123 L2 123"/><path d="M891 104 L891 100 L890 97 L888 94 L886 93 L884 91 L882 90 L878 88 L876 87 L872 87 L868 88 L870 92 L872 94 L874 96 L876 98 L878 100 L880 102 L882 103 L884 104 L888 105 L891 104"/><path d="M742 194 L742 192 L740 188 L739 186 L738 184 L736 182 L734 180 L732 178 L730 176 L728 174 L725 172 L723 170 L722 168 L720 165 L719 162 L718 160 L717 156 L718 152 L718 148 L718 146 L719 142 L720 138 L720 136 L721 132 L721 128 L720 124 L719 122 L716 120 L714 119 L712 118 L708 117 L706 116 L702 115 L698 115 L694 115 L690 115 L686 115 L683 116 L680 117 L678 118 L674 120 L672 121 L670 122 L666 123 L662 123 L658 123 L655 122 L652 121 L650 120 L646 118 L644 117 L642 116 L638 114 L636 113 L634 112 L631 110 L628 109 L626 108 L622 106 L620 106 L616 105 L612 105 L610 106 L608 108 L607 112 L607 116 L607 120 L607 124 L608 128 L608 130 L609 134 L610 137 L611 140 L612 142 L614 145 L616 148 L618 150 L620 152 L621 154 L623 156 L626 158 L628 160 L630 162 L632 164 L634 165 L636 167 L638 168 L641 170 L644 172 L646 173 L649 174 L652 175 L656 175 L660 176 L664 175 L668 175 L672 175 L676 176 L678 177 L680 178 L682 180 L684 182 L686 186 L687 188 L688 192 L689 194"/><path d="M1038 122 L1034 121 L1031 120 L1028 119 L1024 119 L1020 119 L1016 119 L1013 120 L1010 122 L1008 123 L1006 125 L1004 127 L1002 129 L1000 132 L999 134 L997 136 L996 138 L994 140 L992 143 L990 144 L986 146 L982 145 L978 144 L976 143 L974 142 L971 140 L968 138 L966 137 L964 136 L962 134 L959 132 L956 130 L954 129 L952 128 L948 126 L946 125 L943 124 L940 123 L936 123 L932 123 L930 124 L926 126 L925 128 L924 130 L922 134 L922 138 L922 140 L922 144 L922 146 L922 150 L922 154 L923 158 L923 162 L923 166 L923 170 L923 174 L923 178 L924 182 L924 184 L926 188 L927 190 L929 192 L932 194"/><path d="M513 194 L512 192 L510 188 L510 186 L509 182 L508 180 L507 176 L506 172 L506 170 L505 166 L504 162 L504 160 L503 156 L502 154 L501 150 L500 148 L498 145 L496 143 L494 142 L490 141 L486 142 L484 142 L480 144 L478 145 L475 146 L472 148 L470 149 L468 150 L466 152 L462 154 L460 156 L458 157 L456 158 L454 160 L452 162 L450 164 L448 168 L448 170 L447 174 L447 178 L448 182 L448 184 L449 188 L450 192 L450 194"/><path d="M0 176 L4 175 L8 175 L12 176 L14 176 L18 177 L22 177 L24 178 L28 179 L32 180 L34 181 L37 182 L40 183 L43 184 L46 185 L48 186 L52 188 L54 189 L56 190 L60 191 L62 192 L66 194"/><path d="M1026 194 L1025 190 L1025 186 L1026 182 L1028 180 L1030 178 L1032 177 L1036 176 L1038 176"/><path d="M942 194 L944 193 L947 192 L950 190 L952 189 L955 188 L958 187 L960 186 L964 185 L968 185 L972 185 L974 186 L978 188 L980 190 L982 192 L983 194"/><path d="M580 194 L579 192 L576 191 L574 193"/><path d="M61 -4 L64 -3 L66 -2 L70 -1 L72 0 L76 1 L79 2 L82 3 L84 4 L88 6 L90 7 L92 9 L94 11 L95 14 L94 17 L92 18 L89 20 L86 21 L84 22 L80 24 L78 25 L75 26 L72 28 L70 29 L67 30 L64 32 L62 33 L59 34 L56 35 L54 36 L50 37 L46 38 L44 38 L41 38 L38 38 L34 37 L31 36 L28 35 L25 34 L22 33 L20 32 L16 30 L14 29 L12 28 L9 26 L7 24 L4 22 L3 20 L1 18 L0 15"/><path d="M146 194 L146 192 L147 188 L148 184 L148 180 L147 176 L146 172 L145 170 L144 168 L142 166 L139 164 L136 162 L134 161 L132 160 L128 158 L126 156 L124 155 L122 154 L120 152 L118 150 L116 148 L114 146 L112 144 L109 142 L106 140 L104 139 L100 138 L98 137 L94 137 L90 136 L88 136 L84 135 L80 134 L78 133 L75 132 L73 130 L71 128 L70 126 L69 122 L69 118 L69 114 L70 110 L70 108 L71 104 L72 101 L73 98 L75 96 L76 94 L78 92 L81 90 L84 89 L86 88 L90 87 L94 87 L98 87 L101 88 L104 89 L108 90 L110 91 L114 92 L116 93 L118 94 L122 96 L124 97 L126 98 L130 100 L132 101 L134 102 L138 104 L140 105 L142 106 L146 107 L150 106 L152 105 L154 102 L155 100 L156 96 L156 94 L157 90 L157 86 L156 82 L156 79 L156 76 L155 72 L154 68 L154 66 L153 62 L152 58 L152 55 L152 52 L151 48 L150 44 L150 42 L148 38 L147 36 L145 34 L143 32 L141 30 L138 28 L136 26 L134 24 L133 22 L133 18 L134 16 L136 13 L138 10 L140 8 L141 6 L142 4 L144 0 L145 -2"/><path d="M242 -4 L241 -2 L240 0 L239 4 L240 8 L240 11 L241 14 L242 18 L242 20 L243 24 L244 27 L245 30 L246 33 L247 36 L248 39 L249 42 L250 46 L251 48 L251 52 L250 56 L249 58 L248 60 L246 62 L244 64 L241 66 L238 68 L236 69 L234 70 L232 72 L229 74 L226 76 L224 77 L222 79 L220 80 L218 82 L216 84 L214 87 L212 90 L211 92 L210 94 L209 98 L208 101 L207 104 L206 108 L206 110 L205 114 L204 117 L202 120 L201 122 L199 124 L197 126 L194 128 L192 128 L188 129 L184 130 L182 130 L178 130 L174 131 L170 131 L168 132 L166 134 L164 138 L164 140 L164 144 L164 146 L165 150 L166 154 L167 156 L169 158 L170 160 L173 162 L175 164 L177 166 L180 168 L182 170 L184 171 L186 173 L188 174 L190 176 L192 178 L194 180 L196 182 L199 184 L201 186 L203 188 L206 190 L208 192 L210 193 L214 194 L218 193 L221 192 L223 190 L224 188 L224 184 L224 181 L223 178 L222 174 L222 172 L221 168 L221 164 L221 160 L221 156 L222 154 L224 150 L225 148 L227 146 L230 144 L232 143 L234 142 L238 141 L242 141 L244 142 L246 144 L248 146 L250 150 L251 152 L252 156 L252 158 L253 162 L254 165 L255 168 L256 172 L256 174 L258 178 L260 179 L264 180 L268 179 L272 178 L274 177 L278 176 L280 175 L284 174 L286 173 L290 172 L292 171 L296 170 L298 169 L302 168 L304 168 L308 167 L310 166 L314 164 L316 163 L318 161 L320 158 L320 156 L321 152 L321 148 L320 144 L320 142 L319 138 L320 134 L320 131 L321 128 L322 124 L323 122 L324 118 L324 116 L324 112 L324 109 L323 106 L322 104 L320 101 L318 99 L316 97 L314 96 L311 94 L308 93 L305 92 L302 92 L298 91 L294 91 L290 90 L288 90 L284 89 L282 88 L279 86 L277 84 L275 82 L274 80 L272 76 L271 74 L270 71 L269 68 L269 64 L270 60 L271 58 L273 56 L275 54 L278 52 L280 50 L282 48 L284 46 L286 44 L287 42 L288 38 L288 36 L288 34 L286 30 L285 28 L284 26 L282 24 L280 22 L278 20 L276 18 L274 16 L272 14 L270 12 L268 9 L266 7 L264 4 L262 2 L261 0 L260 -2"/><path d="M447 -4 L448 -1 L448 2 L449 6 L449 10 L448 13 L447 16 L446 18 L444 20 L442 22 L440 24 L438 26 L435 28 L433 30 L431 32 L429 34 L427 36 L425 38 L424 40 L422 43 L420 46 L419 48 L418 51 L417 54 L416 56 L415 60 L414 62 L412 66 L411 68 L410 71 L408 74 L406 76 L404 78 L402 80 L400 81 L396 82 L394 82 L390 82 L386 82 L382 82 L378 84 L376 85 L374 88 L373 90 L372 94 L372 96 L371 100 L371 104 L371 108 L370 112 L370 116 L370 120 L370 124 L370 128 L371 132 L372 136 L372 138 L374 141 L376 143 L378 145 L382 146 L386 145 L390 144 L392 144 L395 142 L398 140 L400 139 L402 138 L405 136 L408 134 L410 133 L412 132 L415 130 L418 128 L420 127 L422 126 L425 124 L428 122 L430 121 L432 120 L436 118 L438 117 L441 116 L444 115 L446 114 L450 113 L452 112 L456 110 L458 109 L460 108 L463 106 L466 104 L468 103 L470 102 L473 100 L476 98 L478 97 L480 96 L484 95 L488 95 L490 96 L492 98 L494 100 L496 103 L497 106 L498 108 L500 112 L501 114 L502 118 L503 120 L504 123 L506 126 L508 127 L512 127 L516 126 L518 126 L522 124 L524 123 L526 122 L528 120 L531 118 L532 116 L534 113 L535 110 L536 106 L536 104 L536 100 L536 96 L536 94 L535 90 L534 86 L533 84 L532 81 L531 78 L530 76 L528 74 L526 72 L523 70 L520 69 L517 68 L514 68 L510 68 L506 68 L504 68 L500 68 L498 68 L494 66 L492 65 L490 62 L489 60 L488 58 L486 55 L485 52 L484 50 L482 46 L481 44 L480 42 L478 38 L478 36 L476 32 L475 30 L475 26 L476 22 L477 20 L480 18 L482 17 L486 16 L488 16 L491 16 L494 17 L497 18 L500 20 L502 22 L503 24 L505 26 L506 28 L508 30 L510 32 L512 35 L514 37 L516 38 L518 40 L522 42 L524 43 L526 44 L530 46 L532 46 L536 47 L540 47 L542 46 L545 44 L547 42 L549 40 L550 38 L552 35 L554 32 L555 30 L556 28 L558 25 L560 23 L562 21 L564 20 L568 19 L572 19 L574 20 L578 21 L580 22 L584 24 L586 26 L587 28 L588 32 L588 34 L589 38 L589 42 L590 46 L590 48 L591 52 L592 54 L594 57 L596 59 L598 61 L602 61 L605 60 L608 58 L610 56 L612 54 L613 52 L614 49 L614 46 L614 44 L612 41 L610 38 L608 36 L606 35 L604 33 L602 32 L599 30 L596 28 L594 26 L592 24 L590 22 L590 20 L589 16 L589 12 L589 8 L589 4 L588 0 L588 -4"/><path d="M560 -4 L558 -2 L556 -1 L554 0 L550 1 L546 1 L542 1 L538 1 L534 0 L532 -1 L528 -2 L526 -3 L523 -4"/><path d="M685 -4 L686 0 L686 2 L688 6 L688 8 L690 12 L690 14 L692 17 L694 20 L695 22 L697 24 L699 26 L701 28 L704 30 L706 31 L708 32 L711 34 L714 36 L716 37 L718 39 L720 41 L722 43 L724 46 L725 48 L726 51 L727 54 L728 56 L730 59 L731 62 L733 64 L734 66 L736 70 L738 72 L739 74 L740 76 L742 79 L743 82 L743 86 L743 90 L742 92 L740 95 L738 98 L737 100 L735 102 L734 104 L732 106 L730 108 L728 110 L724 112 L722 112 L718 112 L714 112 L712 112 L708 111 L704 110 L701 110 L698 110 L694 109 L690 108 L688 108 L684 107 L680 107 L676 106 L674 106 L670 105 L666 105 L662 105 L658 106 L655 106 L652 106 L648 106 L646 106 L642 105 L638 104 L636 103 L632 102 L630 101 L626 100 L624 99 L621 98 L618 97 L616 96 L612 95 L608 94 L604 95 L602 96 L600 98 L598 102 L598 104 L597 108 L598 112 L598 114 L599 118 L599 122 L600 126 L600 129 L600 132 L600 136 L600 140 L601 144 L602 147 L604 149 L606 150 L608 152 L612 154 L614 156 L616 157 L618 158 L621 160 L623 162 L626 164 L628 165 L630 167 L632 168 L635 170 L638 172 L640 173 L642 174 L645 176 L648 177 L650 178 L654 179 L658 180 L662 180 L664 180 L668 180 L672 181 L675 182 L678 184 L680 186 L681 188 L682 190 L684 194"/><path d="M789 -4 L788 -1 L787 2 L785 4 L784 6 L782 8 L780 10 L777 12 L774 14 L772 15 L768 16 L766 16 L762 16 L760 16 L756 14 L754 12 L752 10 L751 8 L750 6 L748 2 L748 0 L747 -4"/><path d="M828 194 L827 192 L825 190 L823 188 L821 186 L820 184 L818 181 L817 178 L816 174 L816 172 L816 170 L817 166 L818 162 L818 160 L819 156 L820 154 L821 150 L821 146 L822 142 L822 138 L821 134 L821 130 L820 126 L819 124 L818 120 L817 118 L816 116 L814 113 L812 111 L810 109 L808 107 L806 105 L804 104 L802 102 L799 100 L797 98 L794 96 L792 94 L791 92 L789 90 L788 87 L788 84 L788 81 L789 78 L791 76 L792 74 L794 72 L796 70 L799 68 L802 66 L804 65 L806 63 L808 62 L812 60 L814 60 L818 58 L820 58 L824 57 L828 57 L832 57 L836 56 L839 56 L842 55 L844 53 L845 50 L846 48 L847 44 L847 40 L847 36 L847 32 L847 28 L846 25 L845 22 L844 19 L843 16 L842 14 L840 10 L839 8 L837 6 L836 4 L834 1 L832 -2 L830 -4"/><path d="M925 -4 L928 -2 L930 -1 L933 0 L936 0 L940 0 L942 -0 L946 -2 L948 -3"/><path d="M978 -4 L980 -2 L982 2 L983 4 L984 6 L985 10 L986 12 L987 16 L988 20 L988 22 L988 26 L988 29 L987 32 L986 35 L984 38 L982 40 L980 42 L978 44 L976 45 L974 46 L971 48 L968 49 L964 49 L962 48 L959 46 L956 44 L954 43 L952 42 L948 41 L944 40 L940 41 L937 42 L934 43 L932 44 L929 46 L926 48 L924 50 L922 52 L920 54 L919 56 L918 58 L917 62 L916 65 L916 68 L916 71 L917 74 L918 77 L920 80 L922 82 L924 83 L926 84 L930 86 L932 86 L935 86 L938 86 L942 84 L944 83 L946 82 L949 80 L951 78 L954 76 L956 74 L958 73 L960 71 L964 70 L964 70 L968 71 L971 72 L974 74 L976 75 L978 76 L982 78 L984 78 L988 80 L990 80 L994 81 L998 81 L1002 81 L1006 81 L1010 80 L1012 80 L1016 79 L1020 79 L1023 80 L1026 81 L1028 82 L1032 84 L1034 85 L1036 87 L1038 89"/><path d="M1038 10 L1037 6 L1036 4 L1035 0 L1034 -2"/><path d="M1038 115 L1034 115 L1031 114 L1028 113 L1024 113 L1020 113 L1016 114 L1014 114 L1010 116 L1008 117 L1006 119 L1004 121 L1002 123 L1000 125 L998 128 L996 130 L995 132 L993 134 L991 136 L988 138 L986 139 L982 140 L978 139 L976 138 L972 136 L970 135 L968 134 L965 132 L962 130 L960 129 L958 127 L956 126 L953 124 L950 122 L948 121 L946 120 L943 118 L940 117 L938 116 L934 115 L930 115 L926 115 L922 115 L918 115 L914 114 L912 113 L910 110 L909 108 L908 106 L906 102 L905 100 L904 98 L902 94 L900 92 L898 90 L896 88 L894 87 L892 85 L889 84 L886 82 L884 82 L880 80 L878 79 L875 78 L872 77 L870 76 L866 74 L864 73 L860 72 L858 71 L854 71 L852 72 L850 75 L849 78 L849 82 L850 84 L852 88 L853 90 L856 92 L858 94 L860 96 L862 97 L864 99 L866 100 L868 102 L871 104 L873 106 L875 108 L878 110 L880 112 L882 113 L884 115 L887 116 L890 117 L893 118 L896 119 L900 119 L904 119 L907 120 L910 121 L912 124 L913 126 L914 128 L915 132 L916 135 L917 138 L917 142 L918 145 L918 148 L919 152 L919 156 L919 160 L919 164 L919 168 L919 172 L919 176 L919 180 L920 184 L920 187 L921 190 L922 192"/><path d="M0 90 L2 92 L4 94 L6 97 L8 100 L9 102 L10 104 L11 108 L10 110 L8 113 L6 114 L2 115"/><path d="M520 194 L518 192 L516 190 L514 187 L513 184 L512 182 L511 178 L510 176 L509 172 L508 168 L508 166 L507 162 L506 158 L506 156 L505 152 L505 148 L504 145 L504 142 L502 138 L501 136 L498 135 L494 135 L490 135 L488 136 L484 137 L482 138 L478 140 L476 141 L474 142 L471 144 L468 146 L466 147 L464 148 L461 150 L458 152 L456 153 L454 154 L452 156 L449 158 L447 160 L446 162 L444 166 L444 169 L444 172 L444 174 L444 178 L445 182 L446 186 L446 188 L447 192"/><path d="M746 194 L746 192 L744 188 L744 186 L742 183 L740 180 L739 178 L737 176 L734 174 L732 172 L730 170 L728 168 L726 166 L725 164 L724 162 L723 158 L723 154 L723 150 L724 146 L725 144 L726 141 L728 138 L729 136 L732 135 L736 135 L738 137 L740 138 L742 141 L744 143 L746 146 L747 148 L748 151 L749 154 L750 156 L752 160 L753 162 L755 164 L756 166 L758 168 L761 170 L764 172 L766 173 L768 174 L772 176 L774 177 L776 178 L779 180 L782 182 L784 183 L786 185 L788 188 L789 190 L789 194"/><path d="M588 194 L588 190 L588 186 L588 182 L588 178 L589 174 L590 170 L590 168 L591 164 L592 162 L593 158 L594 154 L593 150 L591 148 L588 147 L586 146 L582 145 L579 146 L577 148 L576 150 L576 154 L576 158 L576 161 L576 164 L576 168 L576 170 L575 174 L574 176 L572 180 L571 182 L570 184 L568 187 L566 189 L564 192 L562 194"/><path d="M0 182 L2 182 L6 181 L10 181 L14 181 L18 181 L22 182 L24 182 L28 183 L31 184 L34 185 L38 186 L40 187 L43 188 L46 189 L48 190 L52 192 L54 193 L56 194"/><path d="M1033 194 L1033 190 L1034 187 L1036 184 L1038 183"/><path d="M953 194 L956 192 L958 191 L962 190 L964 190 L968 190 L970 190 L974 192 L976 193"/><path d="M257 194 L254 192 L252 192 L249 192 L246 193"/><path d="M52 -4 L56 -2 L58 -1 L60 0 L64 2 L66 3 L68 4 L72 6 L74 8 L76 9 L78 12 L77 16 L76 18 L74 20 L71 22 L68 24 L66 25 L64 27 L62 28 L58 30 L56 31 L53 32 L50 33 L46 34 L44 34 L40 34 L38 34 L34 33 L30 32 L28 31 L25 30 L22 29 L20 28 L17 26 L14 24 L12 22 L10 20 L8 18 L7 16 L6 14 L4 10 L3 8 L2 4 L2 2 L1 -2"/><path d="M203 -4 L205 -2 L208 0 L210 1 L212 2 L216 4 L218 4 L222 5 L225 6 L228 8 L230 10 L232 12 L233 14 L234 16 L236 20 L237 22 L238 25 L239 28 L240 30 L242 34 L242 36 L244 40 L244 42 L245 46 L245 50 L245 54 L244 56 L242 59 L240 62 L238 64 L236 65 L234 67 L232 68 L230 70 L227 72 L224 74 L222 75 L220 77 L218 79 L216 80 L214 83 L212 85 L210 88 L209 90 L208 92 L206 96 L206 98 L205 102 L204 105 L203 108 L202 112 L201 114 L200 116 L198 119 L196 121 L194 122 L190 124 L188 124 L184 125 L180 125 L176 124 L174 124 L170 122 L168 121 L166 120 L164 118 L162 114 L161 112 L160 108 L160 104 L160 100 L160 96 L160 92 L160 90 L160 86 L159 82 L158 78 L158 76 L157 72 L156 68 L156 66 L155 62 L155 58 L154 54 L154 50 L154 46 L154 42 L154 40 L153 36 L152 33 L150 30 L149 28 L147 26 L146 24 L144 20 L144 18 L144 14 L144 12 L146 8 L146 6 L148 2 L148 0 L149 -4"/><path d="M266 194 L267 190 L268 187 L270 185 L272 183 L274 182 L278 180 L280 179 L282 178 L286 176 L288 176 L292 174 L294 174 L298 173 L302 172 L304 172 L308 171 L312 171 L316 171 L318 170 L322 168 L324 166 L326 164 L326 162 L327 158 L328 154 L327 150 L327 146 L326 142 L326 139 L326 136 L326 134 L326 130 L327 126 L328 124 L329 120 L329 116 L329 112 L329 108 L328 106 L326 103 L324 100 L322 98 L320 96 L318 94 L316 93 L314 92 L310 90 L308 90 L304 89 L300 88 L298 88 L294 87 L290 86 L288 86 L284 84 L282 83 L280 81 L278 78 L277 76 L276 74 L275 70 L275 66 L276 62 L277 60 L279 58 L280 56 L282 54 L284 52 L286 50 L288 48 L290 46 L292 43 L293 40 L294 36 L293 32 L292 30 L290 28 L288 25 L286 23 L284 21 L282 19 L280 17 L278 15 L276 13 L274 10 L272 8 L271 6 L270 4 L268 1 L267 -2"/><path d="M444 -4 L445 0 L445 4 L444 8 L444 10 L442 14 L441 16 L440 18 L438 20 L436 22 L434 24 L432 26 L430 28 L428 30 L426 32 L424 34 L422 37 L420 39 L418 42 L417 44 L416 47 L415 50 L414 52 L412 56 L411 58 L410 61 L409 64 L407 66 L406 68 L404 70 L402 72 L398 74 L396 74 L392 75 L388 74 L385 74 L382 73 L378 73 L374 72 L372 72 L370 73 L368 75 L367 78 L366 82 L366 84 L365 88 L365 92 L365 96 L365 100 L364 104 L364 108 L364 110 L364 114 L363 118 L363 122 L363 126 L363 130 L363 134 L364 138 L364 140 L366 144 L367 146 L368 148 L370 150 L373 152 L376 153 L380 153 L384 153 L388 152 L390 151 L393 150 L396 149 L398 148 L401 146 L404 144 L406 143 L408 142 L411 140 L414 138 L416 137 L418 136 L421 134 L424 133 L426 132 L429 130 L432 129 L434 128 L438 126 L440 125 L443 124 L446 123 L448 122 L452 120 L454 119 L456 118 L459 116 L462 114 L464 113 L466 111 L468 110 L470 108 L474 106 L476 105 L478 104 L482 103 L486 103 L488 104 L490 106 L492 109 L493 112 L494 114 L495 118 L494 122 L493 124 L492 126 L489 128 L486 130 L484 131 L481 132 L478 134 L476 135 L474 136 L470 138 L468 140 L466 141 L464 142 L461 144 L458 146 L456 147 L454 148 L451 150 L448 152 L446 153 L444 155 L442 158 L441 160 L440 163 L440 166 L440 170 L440 172 L441 176 L442 180 L442 182 L443 186 L444 190 L444 193"/><path d="M548 -4 L544 -3 L540 -4 L536 -4"/><path d="M680 -4 L681 -2 L682 2 L683 4 L684 8 L684 10 L686 14 L686 16 L688 20 L689 22 L690 24 L692 27 L694 30 L696 31 L698 33 L700 34 L703 36 L706 38 L708 39 L710 40 L713 42 L716 44 L717 46 L719 48 L720 50 L722 53 L724 56 L725 58 L726 60 L728 64 L729 66 L730 68 L732 71 L734 74 L735 76 L736 79 L737 82 L737 86 L736 90 L735 92 L734 94 L732 97 L730 99 L728 101 L726 103 L724 104 L720 105 L716 106 L714 106 L710 106 L708 106 L704 105 L700 105 L697 104 L694 103 L690 102 L688 101 L685 100 L682 98 L680 97 L678 96 L674 94 L672 94 L668 93 L664 93 L660 93 L656 94 L654 94 L650 95 L646 96 L644 96 L640 96 L638 96 L634 95 L630 94 L628 94 L624 92 L622 91 L620 90 L616 88 L614 86 L612 85 L610 83 L608 81 L606 78 L606 76 L606 74 L608 71 L610 68 L611 66 L612 64 L614 62 L616 59 L618 56 L620 54 L621 52 L622 48 L621 44 L620 42 L618 39 L616 37 L614 35 L612 34 L610 32 L608 30 L605 28 L603 26 L601 24 L600 22 L598 20 L596 16 L595 14 L594 10 L594 8 L593 4 L593 0 L593 -4"/><path d="M784 -4 L784 -2 L782 2 L781 4 L780 6 L777 8 L775 10 L772 11 L770 12 L766 13 L762 12 L760 11 L758 10 L756 8 L754 6 L752 2 L752 0 L750 -4"/><path d="M970 -4 L972 -3 L974 -1 L976 1 L978 4 L979 6 L980 9 L981 12 L982 16 L982 20 L982 24 L981 28 L980 30 L978 33 L976 35 L974 36 L970 38 L968 38 L965 38 L962 37 L959 36 L956 35 L953 34 L950 33 L946 33 L942 34 L940 34 L937 36 L934 37 L932 39 L930 40 L927 42 L924 44 L922 46 L920 48 L918 50 L917 52 L915 54 L914 56 L912 60 L911 62 L910 66 L909 68 L908 72 L907 74 L906 77 L904 79 L900 79 L896 79 L892 78 L890 77 L886 76 L884 76 L880 74 L878 73 L875 72 L872 71 L870 70 L866 68 L864 67 L862 65 L860 64 L858 62 L856 60 L854 57 L853 54 L852 50 L852 48 L852 44 L852 40 L852 36 L852 32 L851 28 L851 24 L850 20 L849 18 L848 14 L847 12 L846 10 L844 6 L843 4 L841 2 L840 -0 L838 -3"/><path d="M918 -4 L920 -2 L922 0 L925 2 L928 4 L930 5 L934 6 L936 6 L940 6 L942 6 L946 4 L948 3 L950 2 L953 0 L956 -2 L958 -3 L960 -4"/><path d="M361 56 L362 54 L363 50 L364 47 L365 44 L366 40 L366 38 L367 34 L368 32 L369 28 L370 24 L369 20 L368 16 L367 14 L365 12 L362 11 L358 10 L354 11 L352 13 L350 15 L348 18 L348 20 L347 24 L346 27 L346 30 L345 34 L345 38 L345 42 L345 46 L346 48 L348 52 L350 54 L352 55 L354 57 L358 58 L361 56"/><path d="M508 55 L504 56 L500 55 L497 54 L495 52 L494 50 L492 48 L490 44 L489 42 L488 38 L487 36 L487 32 L488 29 L492 29 L494 30 L496 32 L498 34 L500 36 L502 39 L504 41 L506 44 L508 46 L509 48 L510 50 L510 54 L508 55"/><path d="M529 194 L526 193 L524 192 L522 190 L520 188 L518 186 L516 183 L514 180 L514 178 L512 174 L512 172 L511 168 L510 166 L509 162 L509 158 L509 154 L508 150 L509 146 L509 142 L510 140 L512 137 L514 135 L516 133 L518 132 L521 130 L524 128 L526 127 L528 126 L531 124 L533 122 L535 120 L537 118 L538 116 L540 112 L540 110 L540 106 L540 102 L540 98 L540 96 L539 92 L539 88 L538 84 L538 82 L537 78 L536 74 L536 70 L536 68 L536 66 L538 62 L540 60 L542 59 L544 58 L546 56 L549 54 L551 52 L552 50 L554 47 L555 44 L556 42 L558 39 L560 36 L561 34 L563 32 L566 30 L568 29 L572 29 L574 30 L577 32 L578 34 L580 37 L581 40 L582 43 L583 46 L584 50 L584 52 L585 56 L586 58 L588 62 L589 64 L590 66 L592 69 L594 72 L595 74 L596 77 L596 80 L596 82 L594 86 L594 88 L592 92 L591 94 L590 98 L590 100 L589 104 L589 108 L590 112 L590 115 L590 118 L590 122 L590 125 L589 128 L587 130 L584 132 L582 132 L578 133 L575 134 L572 136 L570 137 L569 140 L568 142 L568 146 L568 150 L568 152 L569 156 L570 160 L570 164 L570 168 L569 172 L568 176 L567 178 L566 181 L564 184 L563 186 L561 188 L559 190 L556 192 L554 194"/><path d="M836 194 L834 192 L832 190 L830 188 L828 185 L826 183 L824 180 L823 178 L822 174 L822 172 L821 168 L822 164 L822 162 L823 158 L823 154 L824 150 L824 148 L824 144 L824 140 L824 136 L824 134 L824 130 L823 126 L822 123 L821 120 L820 117 L818 114 L817 112 L816 110 L814 108 L812 106 L809 104 L807 102 L804 100 L802 98 L800 97 L798 95 L796 93 L794 90 L793 88 L792 84 L793 80 L794 78 L796 76 L798 73 L800 71 L802 70 L804 68 L807 66 L810 65 L812 64 L816 62 L818 62 L822 61 L826 61 L830 62 L832 62 L836 64 L838 66 L839 68 L840 70 L841 74 L841 78 L842 82 L842 84 L844 88 L845 90 L846 92 L848 94 L851 96 L854 98 L856 99 L858 101 L860 102 L863 104 L865 106 L868 108 L870 110 L872 112 L874 114 L876 115 L878 117 L880 119 L882 120 L886 122 L888 123 L890 124 L894 125 L896 126 L900 128 L902 129 L904 130 L907 132 L909 134 L910 136 L912 140 L913 142 L914 146 L915 148 L915 152 L916 156 L916 159 L916 162 L916 166 L916 170 L916 172 L916 176 L915 180 L915 184 L915 188 L916 192 L917 194"/><path d="M982 134 L978 134 L976 133 L972 132 L970 131 L968 130 L965 128 L962 126 L960 124 L958 123 L956 121 L954 120 L952 118 L950 116 L947 114 L945 112 L943 110 L942 108 L940 106 L938 102 L938 101 L939 98 L941 96 L943 94 L945 92 L947 90 L950 88 L952 86 L954 85 L956 83 L958 82 L961 80 L964 79 L968 79 L972 79 L974 80 L978 81 L981 82 L984 83 L988 84 L990 84 L994 85 L998 86 L1000 86 L1004 87 L1008 87 L1012 87 L1016 87 L1020 87 L1024 88 L1026 89 L1029 90 L1032 92 L1034 94 L1035 96 L1037 98 L1037 102 L1036 104 L1032 106 L1028 106 L1024 106 L1022 106 L1018 107 L1014 108 L1012 109 L1010 110 L1007 112 L1005 114 L1003 116 L1001 118 L999 120 L997 122 L996 124 L994 126 L992 128 L990 130 L988 132 L984 134 L982 134"/><path d="M150 194 L150 192 L151 188 L152 184 L152 182 L153 178 L153 174 L154 170 L154 167 L154 165 L153 162 L150 160 L148 160 L144 158 L142 157 L138 156 L136 155 L134 154 L130 152 L128 151 L126 149 L124 147 L122 146 L120 144 L118 142 L116 140 L113 138 L110 136 L108 136 L104 134 L102 134 L98 133 L94 132 L92 132 L88 131 L84 130 L82 129 L80 128 L77 126 L76 124 L74 120 L74 118 L74 114 L74 110 L74 108 L75 104 L76 102 L78 98 L80 96 L82 94 L84 93 L86 92 L90 91 L94 90 L98 91 L102 91 L105 92 L108 93 L111 94 L114 95 L116 96 L119 98 L122 100 L124 101 L126 103 L128 104 L131 106 L133 108 L136 110 L138 112 L140 114 L142 116 L144 118 L146 120 L148 122 L150 124 L151 126 L152 128 L153 132 L154 135 L155 138 L155 142 L155 146 L155 150 L155 154 L155 158 L156 161 L158 162 L162 164 L164 165 L166 166 L170 168 L172 169 L174 170 L178 172 L180 174 L182 175 L184 177 L186 178 L188 180 L190 182 L192 184 L194 186 L196 188 L198 190 L200 192"/><path d="M744 169 L740 168 L738 168 L736 166 L733 164 L732 162 L730 159 L730 156 L730 152 L731 150 L733 148 L736 148 L738 149 L740 151 L742 154 L743 156 L744 160 L744 162 L745 166 L744 169"/><path d="M242 179 L238 180 L234 178 L232 176 L231 174 L230 172 L228 168 L228 166 L228 162 L228 158 L229 156 L230 154 L232 152 L234 150 L238 149 L241 150 L244 152 L245 154 L246 156 L247 160 L248 164 L248 168 L247 172 L246 175 L244 178 L242 179"/><path d="M593 194 L593 190 L593 186 L594 182 L594 180 L596 176 L596 174 L598 170 L599 168 L601 166 L603 164 L606 162 L608 162 L611 162 L614 163 L618 164 L620 165 L622 166 L625 168 L628 170 L630 171 L632 172 L635 174 L638 176 L640 177 L642 178 L646 180 L648 181 L652 182 L654 183 L658 184 L660 184 L664 185 L668 186 L670 186 L674 188 L676 190 L678 192 L679 194"/><path d="M750 194 L750 192 L749 188 L749 184 L748 180 L749 176 L752 175 L756 175 L758 176 L762 177 L765 178 L768 179 L770 180 L774 182 L776 183 L778 184 L780 186 L782 188 L784 192 L784 194"/><path d="M2 194 L3 192 L4 190 L7 188 L10 187 L14 186 L18 186 L22 187 L26 187 L30 188 L32 188 L36 189 L38 190 L42 191 L44 192 L48 194"/><path d="M43 -4 L46 -3 L48 -2 L52 0 L54 1 L56 3 L58 4 L61 6 L63 8 L65 10 L66 12 L66 16 L65 18 L64 20 L62 22 L59 24 L56 26 L54 27 L52 28 L48 29 L44 30 L40 30 L36 30 L32 29 L30 28 L26 26 L24 25 L22 24 L19 22 L17 20 L15 18 L13 16 L12 14 L10 10 L10 8 L9 4 L9 0 L10 -2"/><path d="M197 -4 L198 -2 L200 1 L202 4 L203 6 L204 8 L206 10 L209 12 L212 13 L216 14 L218 14 L222 16 L224 17 L226 18 L228 20 L230 22 L232 25 L234 28 L235 30 L236 32 L238 36 L239 38 L240 42 L240 44 L241 48 L240 52 L240 54 L238 58 L236 60 L235 62 L232 64 L230 66 L228 68 L226 69 L224 70 L222 72 L219 74 L217 76 L214 78 L213 80 L211 82 L209 84 L208 86 L206 89 L205 92 L204 94 L203 98 L202 100 L201 104 L200 107 L199 110 L198 112 L196 114 L194 116 L192 118 L188 119 L184 120 L180 119 L176 118 L174 117 L172 115 L170 113 L168 110 L167 108 L166 106 L165 102 L164 98 L164 95 L164 92 L163 88 L162 84 L162 82 L161 78 L160 74 L159 72 L159 68 L158 64 L158 62 L157 58 L157 54 L157 50 L158 46 L158 44 L159 40 L160 37 L161 34 L160 30 L160 28 L158 26 L156 23 L154 20 L153 18 L152 16 L151 12 L151 8 L152 4 L152 2 L153 -2"/><path d="M272 194 L272 192 L274 188 L276 186 L278 184 L280 183 L282 182 L286 180 L288 179 L291 178 L294 177 L298 176 L302 176 L304 176 L308 176 L310 176 L314 176 L318 177 L322 177 L325 176 L328 174 L330 172 L331 170 L332 168 L334 164 L334 162 L335 158 L335 154 L335 150 L334 146 L334 142 L334 140 L334 136 L334 133 L334 130 L335 126 L336 122 L336 120 L336 116 L336 114 L335 110 L334 107 L332 104 L331 102 L329 100 L328 98 L326 96 L323 94 L321 92 L318 91 L316 90 L312 88 L310 87 L306 86 L304 86 L300 85 L296 84 L294 84 L290 82 L288 82 L286 80 L283 78 L282 76 L280 72 L280 70 L280 67 L281 64 L282 62 L284 59 L286 56 L288 54 L290 52 L292 50 L294 48 L296 46 L297 44 L298 42 L299 38 L299 34 L298 32 L296 28 L294 26 L292 24 L290 22 L288 20 L286 18 L284 16 L282 14 L280 12 L278 10 L277 8 L275 6 L274 4 L272 0 L272 -2"/><path d="M441 -4 L442 0 L441 4 L440 8 L440 10 L438 13 L436 16 L435 18 L433 20 L431 22 L429 24 L427 26 L425 28 L423 30 L421 32 L419 34 L418 36 L416 39 L414 42 L413 44 L412 47 L411 50 L410 52 L408 56 L407 58 L406 60 L404 62 L402 64 L400 66 L396 68 L394 68 L390 68 L388 68 L384 66 L382 65 L380 64 L377 62 L376 60 L374 57 L373 54 L372 50 L372 48 L372 46 L372 42 L373 38 L374 34 L374 32 L375 28 L376 24 L376 22 L376 19 L376 16 L374 12 L373 10 L371 8 L368 6 L366 5 L364 4 L360 3 L356 3 L352 3 L350 4 L346 6 L344 8 L343 10 L342 12 L341 16 L340 20 L340 22 L339 26 L338 30 L338 32 L337 36 L336 40 L336 44 L337 48 L338 51 L339 54 L341 56 L342 58 L344 60 L346 62 L348 64 L350 66 L352 68 L354 70 L356 73 L357 76 L358 79 L359 82 L359 86 L359 90 L359 94 L358 98 L358 101 L357 104 L357 108 L356 112 L356 114 L355 118 L354 122 L354 126 L354 130 L355 134 L355 138 L356 141 L357 144 L358 146 L360 150 L362 152 L364 154 L366 156 L368 157 L370 158 L374 159 L378 160 L382 159 L386 159 L388 158 L392 156 L394 156 L398 154 L400 153 L402 152 L406 150 L408 149 L411 148 L414 147 L416 146 L420 144 L422 144 L426 143 L428 142 L432 141 L436 141 L439 142 L438 144 L436 148 L435 150 L434 154 L434 156 L434 160 L434 162 L435 166 L436 170 L437 172 L438 176 L438 178 L439 182 L440 185 L440 188 L441 192"/><path d="M673 -4 L675 -2 L676 0 L678 4 L678 6 L679 10 L680 12 L681 16 L682 19 L683 22 L684 25 L685 28 L686 30 L688 33 L690 36 L692 38 L694 39 L696 40 L700 42 L702 43 L704 44 L708 46 L710 47 L712 49 L714 50 L716 53 L718 55 L720 58 L721 60 L722 62 L724 65 L725 68 L727 70 L728 73 L729 76 L730 78 L731 82 L731 86 L730 89 L728 92 L727 94 L725 96 L722 98 L720 99 L717 100 L714 101 L710 101 L706 101 L703 100 L700 99 L696 98 L694 97 L692 96 L688 94 L686 92 L684 91 L682 90 L679 88 L676 86 L674 86 L670 85 L666 85 L662 85 L658 86 L656 86 L652 87 L649 88 L646 89 L642 89 L638 89 L634 89 L632 88 L628 87 L626 86 L623 84 L621 82 L619 80 L618 78 L617 74 L618 70 L618 68 L620 64 L621 62 L623 60 L624 58 L626 55 L628 52 L628 50 L628 46 L628 44 L626 41 L624 39 L622 37 L620 35 L618 34 L616 32 L613 30 L611 28 L609 26 L607 24 L605 22 L603 20 L602 18 L600 15 L599 12 L598 9 L597 6 L597 2 L596 -2"/><path d="M779 -4 L778 0 L777 2 L776 4 L774 6 L770 8 L768 8 L764 8 L762 7 L760 6 L758 4 L756 0 L755 -2"/><path d="M911 -4 L912 -2 L914 0 L916 2 L918 4 L921 6 L924 8 L926 9 L928 10 L932 12 L934 13 L937 14 L940 15 L944 16 L947 14 L949 12 L951 10 L953 8 L955 6 L958 4 L960 3 L964 2 L968 3 L970 5 L972 7 L974 10 L974 12 L975 16 L975 20 L974 22 L972 25 L970 27 L966 28 L962 27 L958 26 L956 25 L953 24 L950 23 L947 22 L946 22 L942 24 L940 25 L938 27 L936 29 L934 31 L932 32 L930 34 L928 36 L925 38 L923 40 L921 42 L918 44 L916 46 L915 48 L913 50 L912 52 L910 55 L908 58 L907 60 L906 62 L904 66 L902 68 L900 70 L898 71 L894 72 L890 72 L886 71 L882 70 L880 69 L876 68 L874 67 L872 66 L869 64 L866 62 L864 60 L862 58 L860 56 L859 54 L858 51 L857 48 L857 44 L856 40 L856 36 L857 32 L857 28 L857 24 L857 20 L858 16 L858 12 L858 8 L856 4 L854 2 L853 0 L851 -2 L849 -4"/><path d="M544 192 L540 193 L536 192 L534 192 L530 190 L528 190 L525 188 L523 186 L521 184 L519 182 L518 180 L516 177 L515 174 L514 171 L513 168 L512 164 L512 162 L512 158 L512 154 L512 150 L512 148 L514 144 L515 142 L516 140 L518 138 L520 136 L523 134 L526 132 L528 131 L530 130 L533 128 L536 126 L538 125 L540 123 L542 121 L544 118 L544 116 L545 112 L545 108 L545 104 L545 100 L544 96 L544 94 L543 90 L543 86 L543 82 L543 78 L544 74 L545 72 L546 70 L548 68 L550 65 L552 64 L554 62 L556 60 L558 57 L560 55 L562 52 L563 50 L564 48 L566 46 L570 44 L570 44 L573 46 L574 48 L576 52 L577 54 L578 57 L579 60 L580 62 L582 66 L583 68 L584 71 L585 74 L586 78 L586 82 L585 86 L584 90 L584 92 L583 96 L582 100 L582 102 L581 106 L581 110 L580 113 L579 116 L578 118 L576 121 L574 122 L571 124 L568 126 L566 127 L564 129 L562 132 L562 134 L561 138 L561 142 L562 146 L562 148 L563 152 L564 155 L565 158 L565 162 L566 166 L565 170 L564 174 L564 176 L562 180 L560 182 L559 184 L557 186 L555 188 L552 190 L550 191 L546 192 L544 192"/><path d="M847 194 L845 192 L842 190 L840 188 L838 186 L836 184 L834 182 L832 180 L831 178 L829 176 L828 173 L827 170 L826 166 L826 162 L826 158 L827 154 L827 150 L827 146 L827 142 L827 138 L827 134 L826 130 L826 127 L825 124 L825 120 L824 118 L823 114 L822 112 L820 109 L818 106 L816 105 L814 103 L812 101 L810 100 L807 98 L805 96 L802 94 L801 92 L799 90 L798 87 L797 84 L798 81 L799 78 L801 76 L803 74 L805 72 L808 70 L810 69 L812 68 L816 66 L818 66 L822 66 L826 66 L828 67 L830 68 L832 70 L834 74 L835 76 L835 80 L836 84 L836 86 L838 90 L839 92 L840 94 L842 96 L844 98 L847 100 L850 102 L852 103 L854 104 L858 106 L860 108 L862 109 L864 111 L866 112 L868 114 L870 116 L872 118 L874 120 L877 122 L880 124 L882 125 L884 126 L887 128 L890 129 L892 130 L896 132 L898 133 L900 134 L903 136 L905 138 L907 140 L908 142 L910 146 L911 148 L912 152 L912 154 L913 158 L913 162 L913 166 L912 170 L912 174 L912 176 L911 180 L910 184 L910 186 L909 190 L910 194"/><path d="M984 128 L980 129 L976 129 L974 128 L970 126 L968 125 L966 124 L963 122 L961 120 L959 118 L957 116 L955 114 L954 112 L952 109 L951 106 L950 102 L952 98 L953 96 L954 94 L956 92 L958 90 L961 88 L964 86 L966 86 L970 85 L974 85 L978 86 L980 86 L984 87 L987 88 L990 89 L994 90 L996 91 L1000 92 L1002 93 L1004 94 L1007 96 L1008 100 L1006 104 L1004 106 L1003 108 L1001 110 L1000 112 L998 114 L996 117 L994 119 L992 121 L990 124 L988 125 L986 127 L984 128"/><path d="M140 145 L136 145 L134 144 L131 142 L129 140 L127 138 L124 136 L122 134 L120 133 L118 132 L114 131 L111 130 L108 130 L104 129 L100 129 L96 128 L94 128 L90 127 L88 126 L84 124 L82 122 L80 120 L79 118 L78 114 L78 110 L79 106 L80 104 L82 100 L84 98 L86 96 L88 95 L92 94 L94 94 L98 94 L100 94 L104 95 L107 96 L110 97 L112 98 L115 100 L118 102 L120 104 L122 106 L124 108 L126 110 L128 112 L129 114 L130 116 L132 119 L134 122 L135 124 L137 126 L138 128 L140 131 L142 134 L142 136 L143 140 L142 143 L140 145"/><path d="M476 122 L474 120 L474 120 L476 117 L478 116 L481 116 L480 120 L478 121 L476 122"/><path d="M597 194 L597 190 L598 186 L598 184 L600 180 L600 178 L602 175 L604 173 L606 171 L608 170 L612 169 L616 169 L620 170 L622 171 L625 172 L628 174 L630 175 L632 176 L636 178 L638 179 L640 180 L644 182 L646 183 L648 184 L652 185 L654 186 L658 188 L660 188 L664 190 L666 190 L669 192 L672 194"/><path d="M154 194 L155 192 L156 188 L156 186 L158 182 L159 180 L160 178 L162 176 L166 174 L170 174 L174 176 L176 177 L179 178 L182 180 L184 182 L186 183 L188 185 L190 187 L192 190 L194 192 L195 194"/><path d="M755 194 L755 190 L756 187 L758 185 L760 184 L764 184 L766 184 L770 185 L772 186 L775 188 L777 190 L778 192"/><path d="M13 194 L16 193 L19 192 L22 192 L26 192 L29 192 L32 192 L36 193"/><path d="M48 24 L44 25 L40 25 L36 25 L32 24 L30 23 L27 22 L24 20 L22 18 L20 16 L19 14 L18 12 L17 8 L17 4 L18 1 L20 -1 L23 -2 L26 -3 L30 -3 L34 -2 L36 -2 L40 -1 L42 0 L46 2 L48 3 L50 4 L52 6 L54 8 L56 10 L58 14 L56 18 L55 20 L52 22 L50 23 L48 24"/><path d="M191 -4 L192 -2 L194 2 L194 4 L195 8 L194 12 L193 14 L192 16 L190 18 L187 20 L184 21 L182 22 L178 23 L174 22 L172 22 L168 21 L166 20 L164 18 L161 16 L160 14 L158 11 L157 8 L157 4 L157 0 L158 -3"/><path d="M337 -4 L336 -2 L335 2 L334 6 L334 8 L333 12 L333 16 L333 20 L332 23 L331 26 L330 30 L330 32 L328 36 L328 38 L327 42 L328 46 L329 48 L330 51 L332 54 L333 56 L334 58 L336 60 L338 62 L340 64 L342 67 L344 69 L346 71 L348 74 L349 76 L350 78 L352 82 L352 84 L352 88 L352 92 L352 94 L351 98 L350 100 L348 102 L345 104 L343 104 L340 103 L338 101 L336 99 L334 98 L332 96 L330 94 L327 92 L324 90 L322 89 L320 88 L316 86 L314 85 L310 84 L308 84 L304 83 L301 82 L298 81 L294 80 L292 79 L290 78 L288 76 L286 73 L285 70 L285 66 L286 64 L288 61 L290 58 L292 56 L294 54 L296 52 L298 51 L300 49 L302 47 L304 44 L306 42 L306 40 L307 36 L306 34 L304 30 L302 28 L300 26 L298 24 L296 22 L294 20 L292 19 L290 17 L288 15 L286 13 L284 11 L282 9 L280 6 L279 4 L278 2 L277 -2"/><path d="M438 -4 L438 0 L438 2 L437 6 L436 9 L434 12 L433 14 L431 16 L430 18 L428 20 L425 22 L423 24 L421 26 L419 28 L417 30 L416 32 L414 34 L412 38 L411 40 L410 42 L408 46 L407 48 L406 50 L404 54 L402 56 L401 58 L398 60 L396 61 L392 61 L388 60 L386 59 L384 58 L382 56 L380 52 L379 50 L378 46 L378 42 L379 38 L379 34 L380 32 L381 28 L381 24 L382 20 L381 16 L380 12 L380 10 L378 7 L376 5 L374 3 L372 1 L370 0 L366 -2 L364 -2 L360 -3 L356 -4"/><path d="M665 -4 L668 -2 L669 0 L671 2 L672 4 L674 8 L674 10 L675 14 L676 17 L677 20 L677 24 L678 27 L679 30 L680 34 L680 36 L682 40 L683 42 L684 44 L686 47 L688 48 L692 50 L694 50 L698 51 L702 52 L704 52 L708 54 L710 56 L712 57 L714 59 L716 62 L718 64 L719 66 L720 68 L722 72 L723 74 L724 77 L725 80 L724 84 L724 86 L722 89 L720 91 L718 93 L715 94 L712 95 L708 95 L704 94 L702 94 L698 92 L696 91 L694 90 L692 88 L689 86 L687 84 L685 82 L683 80 L680 78 L678 77 L674 76 L670 76 L666 77 L662 78 L660 78 L656 79 L654 80 L650 81 L646 82 L642 82 L640 82 L638 82 L634 81 L632 80 L629 78 L627 76 L626 73 L626 70 L626 68 L628 64 L629 62 L631 60 L632 58 L634 55 L635 52 L636 48 L635 44 L634 42 L632 40 L630 38 L628 36 L625 34 L622 32 L620 31 L618 29 L616 28 L613 26 L611 24 L609 22 L607 20 L606 18 L604 15 L602 12 L602 10 L601 6 L600 2 L600 0 L600 -4"/><path d="M771 -4 L770 0 L768 1 L764 0 L763 -2"/><path d="M892 66 L888 67 L884 66 L882 66 L878 64 L876 63 L874 62 L871 60 L868 58 L866 56 L865 54 L864 52 L862 48 L862 46 L861 42 L861 38 L862 34 L862 32 L863 28 L864 26 L866 22 L868 20 L870 18 L872 17 L874 16 L877 14 L880 12 L882 11 L884 10 L888 8 L890 6 L892 5 L894 3 L898 2 L902 3 L906 4 L908 5 L910 6 L914 8 L916 9 L918 10 L921 12 L924 14 L926 16 L928 18 L929 20 L929 24 L928 28 L926 30 L925 32 L923 34 L921 36 L919 38 L917 40 L915 42 L913 44 L911 46 L910 48 L908 51 L906 54 L904 56 L903 58 L902 60 L900 62 L898 64 L894 66 L892 66"/><path d="M188 114 L184 115 L181 114 L178 113 L176 111 L174 109 L172 107 L171 104 L170 102 L169 98 L168 96 L167 92 L166 88 L166 86 L165 82 L164 80 L163 76 L162 72 L161 70 L161 66 L160 62 L160 60 L160 56 L160 54 L161 50 L162 46 L163 44 L164 42 L166 40 L168 38 L170 36 L174 34 L176 33 L180 32 L182 32 L186 31 L190 31 L194 30 L196 29 L200 28 L202 27 L206 26 L208 25 L212 24 L216 24 L220 25 L224 26 L226 28 L228 29 L230 32 L231 34 L233 36 L234 39 L235 42 L236 46 L236 48 L236 50 L235 54 L234 56 L232 59 L230 61 L228 63 L226 65 L224 67 L222 68 L220 70 L217 72 L215 74 L212 76 L210 78 L209 80 L207 82 L206 84 L204 87 L202 90 L201 92 L200 96 L199 98 L198 102 L197 104 L196 107 L194 110 L192 112 L190 113 L188 114"/><path d="M564 113 L560 114 L556 113 L554 110 L553 108 L552 105 L551 102 L550 99 L549 96 L549 92 L548 88 L549 84 L549 80 L550 78 L552 75 L554 73 L556 71 L558 69 L560 68 L564 66 L566 65 L570 66 L572 67 L574 69 L576 72 L577 74 L578 78 L578 80 L578 84 L578 86 L577 90 L576 94 L575 96 L574 100 L573 102 L572 104 L570 108 L568 110 L566 112 L564 113"/><path d="M882 194 L880 194 L876 193 L874 192 L870 191 L866 190 L864 189 L860 188 L858 187 L855 186 L852 184 L850 183 L847 182 L844 180 L842 179 L840 177 L838 176 L836 174 L834 171 L833 168 L832 166 L831 162 L831 158 L830 154 L830 150 L830 146 L830 142 L830 138 L830 136 L830 132 L829 128 L829 124 L829 120 L828 116 L828 114 L827 110 L826 106 L825 104 L823 102 L820 100 L818 99 L816 98 L813 96 L810 94 L808 93 L806 91 L804 88 L803 86 L803 82 L804 80 L806 77 L808 75 L810 74 L813 72 L816 71 L820 71 L824 72 L826 74 L828 76 L828 78 L829 82 L830 86 L830 90 L830 92 L831 96 L832 98 L834 100 L837 102 L840 103 L843 104 L846 105 L848 106 L852 108 L854 109 L856 110 L859 112 L861 114 L864 116 L866 118 L868 120 L870 122 L872 124 L874 125 L876 127 L878 128 L881 130 L884 131 L886 132 L890 134 L892 135 L894 136 L897 138 L900 140 L902 142 L904 144 L905 146 L906 148 L908 152 L908 154 L909 158 L909 162 L909 166 L909 170 L908 174 L907 176 L906 180 L905 182 L904 185 L902 188 L901 190 L900 192 L898 194"/><path d="M982 123 L978 124 L974 123 L971 122 L968 120 L966 118 L964 117 L962 114 L960 112 L959 110 L958 106 L959 102 L960 98 L962 96 L964 94 L966 93 L968 92 L972 91 L976 91 L980 91 L983 92 L986 93 L989 94 L992 95 L994 97 L996 99 L997 102 L996 106 L996 108 L994 111 L992 114 L990 116 L989 118 L987 120 L984 122 L982 123"/><path d="M112 122 L108 123 L104 123 L100 123 L96 123 L93 122 L90 121 L88 120 L86 118 L84 114 L84 112 L84 108 L84 106 L86 103 L88 101 L90 99 L94 98 L96 98 L100 98 L102 99 L106 100 L108 101 L110 102 L112 104 L114 106 L116 108 L118 112 L118 114 L118 117 L116 120 L114 121 L112 122"/><path d="M546 188 L542 189 L538 189 L534 188 L532 187 L529 186 L526 184 L524 183 L522 181 L520 178 L519 176 L518 174 L516 170 L516 168 L515 164 L515 160 L514 156 L515 152 L516 148 L517 146 L518 144 L520 142 L522 140 L524 138 L528 136 L530 135 L532 134 L536 132 L538 131 L541 130 L544 129 L548 129 L550 131 L552 133 L553 136 L554 138 L556 142 L557 144 L558 148 L559 150 L560 154 L560 156 L561 160 L562 164 L562 168 L561 172 L560 175 L559 178 L557 180 L556 182 L554 184 L551 186 L548 187 L546 188"/><path d="M277 194 L278 190 L280 188 L282 186 L284 185 L286 184 L290 182 L292 181 L296 180 L298 180 L302 180 L306 180 L308 180 L312 181 L314 182 L318 183 L320 184 L324 186 L326 187 L330 188 L334 187 L336 184 L337 182 L338 178 L339 176 L340 172 L341 170 L342 166 L343 164 L344 162 L346 158 L348 157 L352 157 L354 158 L357 160 L360 161 L362 162 L366 164 L368 164 L372 165 L376 165 L380 165 L384 164 L386 164 L390 162 L392 162 L396 160 L398 159 L402 158 L404 157 L408 156 L410 155 L414 155 L418 155 L421 156 L424 158 L426 160 L428 162 L429 164 L430 166 L432 170 L433 172 L434 175 L435 178 L436 181 L437 184 L438 188 L438 190 L438 194"/><path d="M600 194 L601 190 L602 186 L603 184 L604 181 L606 178 L608 176 L610 175 L613 174 L616 174 L619 174 L622 175 L625 176 L628 177 L630 178 L634 180 L636 181 L638 182 L642 184 L644 185 L646 186 L650 188 L652 189 L654 190 L658 192 L660 193 L662 194"/><path d="M159 194 L160 190 L161 188 L162 186 L164 183 L166 182 L170 181 L174 182 L176 182 L180 184 L182 186 L184 187 L186 189 L188 192 L190 194"/><path d="M763 194 L766 192 L770 194"/><path d="M185 -4 L186 -1 L187 2 L186 6 L185 8 L184 10 L180 12 L178 13 L174 13 L171 12 L168 11 L166 9 L164 6 L164 4 L163 0 L164 -4"/><path d="M321 -4 L322 -2 L324 2 L324 4 L325 8 L325 12 L324 16 L324 18 L322 22 L321 24 L318 26 L316 27 L313 26 L310 25 L308 24 L305 22 L302 20 L300 19 L298 18 L295 16 L292 14 L290 12 L288 10 L286 8 L284 6 L283 4 L282 2 L281 -2"/><path d="M435 -4 L435 0 L434 4 L433 6 L432 8 L430 11 L428 14 L426 16 L424 18 L422 19 L420 21 L418 23 L416 25 L414 26 L412 29 L410 31 L408 34 L407 36 L406 38 L404 42 L403 44 L402 46 L400 48 L398 50 L395 52 L392 52 L390 51 L388 50 L386 46 L386 44 L385 40 L386 36 L386 34 L387 30 L388 26 L388 22 L388 18 L387 14 L386 11 L385 8 L384 6 L382 4 L380 1 L378 -1 L376 -3"/><path d="M657 -4 L660 -2 L662 -0 L664 2 L666 4 L667 6 L668 8 L669 12 L670 15 L671 18 L671 22 L672 26 L672 30 L672 34 L671 38 L671 42 L671 46 L671 50 L671 54 L671 58 L670 60 L668 63 L666 65 L664 67 L662 68 L658 70 L656 70 L652 72 L650 72 L646 72 L642 72 L640 71 L639 68 L639 64 L640 62 L642 59 L644 56 L645 54 L645 50 L645 46 L644 44 L642 42 L640 40 L638 38 L635 36 L632 34 L630 33 L628 32 L625 30 L622 28 L620 27 L618 26 L616 24 L613 22 L611 20 L610 18 L608 16 L606 12 L605 10 L604 7 L603 4 L603 0 L603 -4"/><path d="M44 18 L40 19 L36 19 L33 18 L30 16 L28 15 L26 12 L26 10 L26 8 L28 5 L31 4 L34 4 L36 4 L40 5 L42 6 L44 8 L46 10 L48 14 L46 17 L44 18"/><path d="M894 60 L890 61 L886 62 L882 61 L879 60 L876 58 L874 57 L872 55 L870 53 L868 50 L867 48 L866 44 L866 42 L866 39 L866 36 L868 32 L869 30 L870 28 L872 26 L874 24 L877 22 L880 20 L882 19 L885 18 L888 17 L890 16 L894 14 L896 14 L900 13 L904 12 L908 13 L911 14 L914 15 L916 17 L918 18 L920 21 L921 24 L920 28 L919 30 L918 32 L916 34 L914 36 L912 39 L910 41 L908 44 L906 46 L905 48 L904 50 L902 52 L900 55 L898 57 L896 59 L894 60"/><path d="M186 108 L182 108 L180 107 L178 105 L176 103 L174 100 L173 98 L172 95 L171 92 L170 89 L169 86 L168 83 L167 80 L166 77 L165 74 L164 70 L163 68 L163 64 L163 60 L163 56 L164 52 L165 50 L166 47 L168 45 L170 43 L172 42 L176 41 L178 40 L182 39 L186 39 L190 38 L193 38 L196 37 L200 36 L202 36 L206 35 L208 34 L212 33 L216 32 L220 33 L223 34 L225 36 L227 38 L229 40 L230 43 L231 46 L231 50 L230 54 L229 56 L228 58 L226 60 L224 62 L222 64 L219 66 L217 68 L214 70 L212 72 L210 74 L208 76 L206 78 L205 80 L203 82 L202 84 L200 87 L199 90 L198 92 L196 96 L195 98 L194 101 L192 104 L190 106 L188 108 L186 108"/><path d="M342 90 L338 91 L335 90 L332 89 L330 88 L326 86 L324 85 L321 84 L318 83 L315 82 L312 81 L308 80 L306 80 L302 79 L300 78 L296 76 L294 75 L292 72 L291 70 L291 66 L292 64 L294 61 L296 59 L298 57 L300 55 L302 54 L305 52 L308 50 L310 49 L314 49 L318 50 L320 51 L322 53 L324 55 L326 57 L328 59 L330 62 L332 64 L334 66 L335 68 L337 70 L339 72 L340 74 L342 77 L343 80 L344 83 L344 86 L344 88 L342 90"/><path d="M712 87 L708 87 L704 87 L702 86 L700 84 L698 82 L696 80 L694 76 L694 74 L694 70 L694 68 L696 66 L698 64 L702 63 L706 64 L708 65 L710 66 L712 68 L714 71 L716 74 L716 76 L717 80 L716 83 L714 85 L712 87"/><path d="M564 94 L560 95 L558 93 L557 90 L557 86 L558 83 L560 81 L562 80 L565 80 L567 82 L568 84 L568 87 L567 90 L566 92 L564 94"/><path d="M816 86 L814 85 L814 82 L816 81 L818 82 L818 86 L816 86"/><path d="M980 116 L976 117 L973 116 L970 114 L968 112 L967 110 L966 106 L968 102 L969 100 L972 98 L974 98 L978 97 L982 98 L984 99 L986 100 L988 103 L988 106 L988 108 L986 111 L984 114 L982 115 L980 116"/><path d="M104 115 L100 116 L96 115 L93 114 L92 112 L92 108 L93 106 L96 104 L98 104 L100 104 L104 106 L106 108 L107 110 L106 113 L104 115"/><path d="M890 186 L886 186 L882 186 L880 186 L876 185 L872 184 L870 184 L866 182 L864 181 L861 180 L858 179 L856 178 L852 176 L850 175 L848 174 L845 172 L842 170 L840 168 L839 166 L837 164 L836 160 L835 158 L835 154 L834 150 L834 147 L834 144 L834 140 L833 136 L833 132 L833 128 L833 124 L833 120 L834 116 L835 114 L837 112 L840 111 L844 111 L848 112 L850 113 L853 114 L856 116 L858 117 L860 119 L862 120 L864 122 L866 124 L868 126 L871 128 L873 130 L876 132 L878 133 L880 134 L884 136 L886 137 L888 138 L892 140 L894 141 L896 143 L898 144 L900 146 L902 149 L903 152 L904 154 L905 158 L905 162 L905 166 L905 170 L904 172 L903 176 L901 178 L900 180 L898 182 L896 184 L892 186 L890 186"/><path d="M546 184 L542 185 L538 185 L534 184 L532 184 L529 182 L526 180 L524 178 L522 176 L521 174 L520 172 L519 168 L518 165 L518 162 L517 158 L518 154 L518 152 L520 148 L521 146 L523 144 L526 142 L528 140 L530 139 L533 138 L536 137 L540 137 L544 137 L546 138 L548 140 L550 142 L552 145 L554 148 L554 150 L556 154 L557 156 L558 160 L558 162 L558 166 L558 169 L557 172 L556 175 L554 178 L552 180 L550 182 L548 183 L546 184"/><path d="M371 194 L368 192 L366 191 L363 190 L360 189 L358 188 L355 186 L353 184 L352 182 L351 178 L352 175 L354 173 L356 172 L360 172 L364 172 L366 172 L370 172 L373 172 L376 172 L380 171 L383 170 L386 169 L388 168 L392 167 L394 166 L398 164 L400 164 L404 162 L406 162 L410 161 L414 161 L417 162 L420 163 L422 165 L424 166 L426 169 L428 171 L430 174 L431 176 L432 179 L433 182 L434 185 L435 188 L435 192"/><path d="M603 194 L604 191 L605 188 L606 186 L608 183 L610 181 L612 180 L616 178 L620 178 L624 179 L627 180 L630 181 L632 182 L636 184 L638 185 L640 186 L643 188 L646 190 L648 191 L651 192 L654 194"/><path d="M282 194 L282 192 L284 190 L286 188 L290 186 L292 185 L296 184 L298 184 L302 184 L304 184 L308 185 L310 186 L314 188 L316 190 L318 192 L320 194"/><path d="M165 194 L166 192 L168 190 L172 188 L176 189 L179 190 L181 192 L183 194"/><path d="M312 -4 L314 -1 L315 2 L315 6 L315 10 L314 12 L311 14 L308 15 L304 14 L302 14 L298 12 L296 11 L294 10 L292 8 L290 6 L288 3 L287 0 L287 -4"/><path d="M432 -4 L431 0 L430 3 L429 6 L427 8 L426 10 L424 12 L421 14 L418 16 L416 18 L414 19 L412 20 L408 22 L406 23 L404 24 L400 24 L398 22 L397 20 L396 18 L394 14 L393 12 L392 9 L390 6 L389 4 L387 2 L386 -0 L384 -3"/><path d="M651 -4 L654 -2 L656 0 L658 2 L660 4 L661 6 L662 8 L664 12 L664 14 L665 18 L665 22 L665 26 L664 29 L663 32 L662 34 L660 36 L657 38 L654 38 L652 38 L648 37 L646 36 L642 34 L640 34 L636 32 L634 31 L632 30 L628 28 L626 27 L624 26 L620 24 L618 22 L616 21 L614 19 L612 16 L610 14 L609 12 L608 10 L607 6 L606 2 L606 -2"/><path d="M888 56 L884 56 L882 56 L878 54 L876 52 L874 50 L873 48 L872 46 L871 42 L872 38 L872 36 L874 33 L876 31 L878 29 L880 27 L883 26 L886 24 L888 24 L892 22 L894 22 L898 21 L902 21 L906 21 L908 22 L910 24 L911 28 L910 31 L908 34 L907 36 L906 38 L904 41 L902 44 L901 46 L899 48 L898 50 L896 52 L893 54 L890 56 L888 56"/><path d="M188 98 L184 100 L180 98 L178 96 L177 94 L176 92 L174 89 L173 86 L172 84 L170 80 L169 78 L168 74 L167 72 L166 68 L166 66 L166 62 L166 58 L166 56 L168 52 L169 50 L171 48 L174 46 L176 46 L180 45 L184 44 L186 44 L190 43 L194 43 L198 43 L202 42 L204 42 L208 41 L212 40 L216 40 L220 42 L222 43 L224 46 L224 48 L224 52 L224 54 L222 57 L220 60 L218 62 L216 63 L214 65 L212 67 L210 69 L208 71 L206 73 L204 75 L202 78 L200 80 L199 82 L198 84 L196 86 L194 90 L193 92 L192 94 L190 96 L188 98"/><path d="M328 78 L324 79 L320 78 L318 78 L314 77 L310 76 L308 76 L304 74 L302 73 L300 72 L298 68 L299 64 L301 62 L303 60 L306 58 L308 58 L312 57 L315 58 L318 59 L320 61 L322 63 L324 65 L326 67 L328 70 L329 72 L330 76 L328 78"/><path d="M886 180 L882 180 L880 180 L876 179 L872 178 L870 177 L867 176 L864 175 L862 174 L858 172 L856 171 L854 170 L851 168 L848 166 L846 164 L844 162 L842 160 L841 158 L840 155 L839 152 L838 148 L838 145 L838 142 L838 138 L838 134 L838 130 L838 127 L839 124 L840 121 L842 119 L846 118 L850 119 L853 120 L856 122 L858 124 L860 125 L862 127 L864 129 L866 130 L868 132 L871 134 L874 136 L876 137 L878 138 L882 140 L884 141 L886 142 L890 144 L892 145 L894 147 L896 149 L898 151 L899 154 L900 156 L901 160 L901 164 L900 168 L900 170 L898 173 L896 176 L894 177 L892 179 L888 180 L886 180"/><path d="M544 181 L540 181 L536 181 L533 180 L530 179 L528 177 L526 175 L524 172 L523 170 L522 168 L521 164 L521 160 L521 156 L522 153 L523 150 L525 148 L527 146 L530 144 L532 143 L536 142 L538 142 L540 142 L544 144 L546 145 L548 147 L550 150 L551 152 L552 154 L554 158 L554 160 L555 164 L554 168 L554 170 L552 174 L551 176 L549 178 L546 180 L544 181"/><path d="M381 194 L380 192 L378 190 L376 186 L376 184 L376 182 L378 180 L380 178 L384 176 L386 175 L388 174 L391 172 L394 171 L396 170 L400 168 L402 168 L406 167 L410 167 L414 167 L417 168 L420 169 L422 171 L424 173 L426 175 L428 178 L429 180 L430 183 L431 186 L432 190 L432 194"/><path d="M607 194 L608 191 L609 188 L611 186 L614 184 L616 183 L620 182 L624 183 L628 184 L630 185 L633 186 L636 187 L638 188 L641 190 L644 192 L646 193"/><path d="M287 194 L289 192 L292 190 L294 189 L298 188 L302 189 L306 190 L308 191 L310 193"/><path d="M302 3 L298 3 L296 1 L296 -2 L298 -3 L302 -2 L303 0 L302 3"/><path d="M428 -4 L427 0 L426 2 L424 5 L422 7 L420 8 L417 10 L414 12 L412 12 L408 12 L406 12 L402 10 L400 8 L398 6 L396 4 L395 2 L393 0 L392 -2"/><path d="M645 -4 L648 -2 L650 -0 L652 2 L654 4 L655 6 L657 8 L658 11 L659 14 L659 18 L658 22 L658 24 L656 27 L654 28 L650 30 L646 30 L642 29 L638 28 L636 28 L632 26 L630 26 L626 24 L624 23 L622 22 L620 20 L617 18 L615 16 L614 14 L612 11 L611 8 L610 6 L610 2 L610 -2 L610 -4"/><path d="M890 48 L886 49 L882 48 L880 46 L879 44 L879 40 L880 37 L882 35 L884 33 L887 32 L890 31 L894 31 L896 32 L898 36 L897 40 L896 42 L894 45 L892 47 L890 48"/><path d="M188 88 L184 89 L181 88 L178 86 L177 84 L175 82 L174 80 L172 76 L171 74 L170 70 L169 68 L169 64 L169 60 L170 57 L172 54 L174 52 L176 51 L178 50 L182 49 L186 48 L190 48 L194 48 L198 48 L202 48 L206 48 L210 49 L213 50 L214 52 L214 55 L213 58 L211 60 L210 62 L208 64 L206 67 L204 69 L202 71 L200 74 L198 76 L197 78 L195 80 L194 82 L192 84 L190 86 L188 88"/><path d="M888 173 L884 174 L880 174 L876 173 L873 172 L870 171 L868 170 L864 168 L862 167 L860 166 L857 164 L854 162 L852 161 L850 159 L848 157 L846 154 L845 152 L844 148 L844 146 L843 142 L843 138 L844 134 L844 132 L846 129 L848 128 L852 128 L854 129 L856 130 L859 132 L861 134 L864 136 L866 137 L868 139 L870 140 L874 142 L876 143 L878 144 L882 146 L884 147 L886 148 L889 150 L891 152 L893 154 L894 156 L895 160 L895 164 L894 168 L892 170 L890 172 L888 173"/><path d="M544 176 L540 177 L536 177 L533 176 L530 174 L528 172 L527 170 L526 168 L525 164 L524 160 L525 156 L526 154 L528 151 L530 149 L533 148 L536 147 L540 148 L542 148 L544 150 L546 152 L548 155 L549 158 L550 160 L551 164 L550 168 L550 170 L548 173 L546 175 L544 176"/><path d="M389 194 L388 191 L387 188 L387 184 L388 182 L390 180 L392 178 L395 176 L398 175 L400 174 L404 172 L406 172 L410 172 L413 172 L416 173 L418 174 L421 176 L423 178 L424 180 L426 183 L427 186 L428 190 L428 192"/><path d="M611 194 L612 192 L614 189 L616 188 L620 186 L624 186 L628 187 L630 188 L634 190 L636 191 L639 192 L642 194"/><path d="M423 -4 L422 -2 L420 0 L418 2 L414 4 L412 4 L409 4 L406 3 L404 2 L402 0 L400 -2"/><path d="M639 -4 L642 -2 L644 -0 L646 1 L648 4 L650 6 L651 8 L652 10 L653 14 L652 18 L651 20 L650 22 L646 24 L644 24 L640 24 L638 24 L634 23 L630 22 L628 21 L626 20 L622 18 L620 16 L618 14 L616 12 L615 10 L614 7 L613 4 L613 0 L614 -3"/><path d="M186 80 L182 80 L180 79 L178 77 L176 74 L175 72 L174 70 L173 66 L173 62 L174 59 L176 57 L178 55 L181 54 L184 53 L188 53 L192 54 L194 54 L198 56 L200 57 L201 60 L200 64 L199 66 L198 68 L196 71 L194 74 L192 76 L190 78 L188 79 L186 80"/><path d="M882 164 L878 164 L876 164 L872 162 L870 161 L868 160 L865 158 L862 156 L860 154 L858 152 L857 150 L857 146 L860 146 L862 147 L866 148 L868 149 L871 150 L874 151 L876 152 L880 154 L882 155 L884 157 L885 160 L884 163 L882 164"/><path d="M542 171 L538 172 L534 171 L532 169 L530 166 L529 164 L529 160 L530 158 L532 155 L534 154 L538 153 L540 154 L542 156 L544 158 L545 162 L545 166 L544 169 L542 171"/><path d="M397 194 L396 190 L396 188 L396 186 L398 183 L400 181 L402 179 L405 178 L408 177 L412 178 L414 178 L418 180 L420 182 L421 184 L422 186 L423 190 L423 194"/><path d="M616 194 L618 192 L620 191 L624 190 L628 191 L631 192 L634 193"/><path d="M631 -4 L634 -3 L636 -2 L638 0 L641 2 L643 4 L644 6 L646 10 L646 12 L646 14 L644 17 L642 18 L638 19 L634 19 L630 18 L628 17 L626 16 L623 14 L621 12 L620 10 L618 7 L617 4 L618 0 L619 -2 L621 -4"/><path d="M188 68 L184 70 L181 68 L181 64 L182 62 L186 61 L188 62 L189 66 L188 68"/><path d="M412 192 L409 190 L412 189 L412 192"/></g></svg>
<div id="card"></div>
<!-- path -->
<svg class="i" style="left:0;top:0" width="1024" height="100">
  <path d="M672 50 L978.5 50 A12.5 12.5 0 0 1 978.5 75 L672 75 L678.5 62.5 Z" fill="#ecebea"/>
  <path d="M353 50 L669 50 L675.5 62.5 L669 75 L353 75 L359.5 62.5 Z" fill="#ecebea"/>
  <path d="M45.5 51 L349 51 L355.5 62.5 L349 74 L45.5 74 A11.5 11.5 0 0 1 45.5 51 Z" fill="#fff" stroke="#2b6bb8" stroke-width="1.5"/>
</svg>
<!-- boxes -->
<div class="box" style="left:46px;top:126px;width:293px;height:26px"></div>
<div class="box" style="left:365px;top:126px;width:293.5px;height:26px"></div>
<div class="box" style="left:691px;top:105px;width:280.5px;height:63px;border-radius:6px"></div>
<div class="box" style="left:46px;top:216px;width:293px;height:26px"></div>
<div class="box" style="left:368px;top:216px;width:287.5px;height:25.5px"></div>
<div class="box" style="left:294.5px;top:304px;width:364px;height:25.5px"></div>
<div class="box" style="left:306px;top:390px;width:352.5px;height:25.5px"></div>
<div class="box" style="left:306px;top:434.5px;width:352.5px;height:25.5px"></div>
<div class="box" style="left:306px;top:478.5px;width:352.5px;height:25.5px"></div>
<!-- buttons -->
<div style="position:absolute;left:253px;top:524px;width:50px;height:25px;background:#1f5499;border-radius:3px"></div>
<div class="box" style="left:310px;top:524px;width:142px;height:25px"></div>
<!-- icons -->
<svg class="i" style="left:0;top:0" width="1024" height="568">
  <!-- header icon -->
  <rect x="20.2" y="20.8" width="19.3" height="19.2" rx="3.5" fill="#b07dd0"/>
  <g fill="#fff">
  <rect x="23.9" y="25.1" width="11.9" height="1"/>
  <rect x="23.9" y="35" width="11.9" height="1"/>
  <rect x="24.1" y="26.9" width="1.6" height="6.9"/>
  <rect x="27.1" y="26.9" width="0.8" height="6.9"/>
  <rect x="29.1" y="26.9" width="1.4" height="6.9"/>
  <rect x="31.8" y="26.9" width="0.8" height="6.9"/>
  <rect x="34" y="26.9" width="1.4" height="6.9"/>
  </g>
  <!-- asterisks -->
  <g fill="#c23934">
  <path d="M49.50 113.30 L50.15 114.41 L51.40 114.68 L50.55 115.64 L50.68 116.92 L49.50 116.40 L48.32 116.92 L48.45 115.64 L47.60 114.68 L48.85 114.41Z"/>
  <path d="M368.90 113.60 L369.55 114.71 L370.80 114.98 L369.95 115.94 L370.08 117.22 L368.90 116.70 L367.72 117.22 L367.85 115.94 L367.00 114.98 L368.25 114.71Z"/>
  <path d="M49.50 203.10 L50.15 204.21 L51.40 204.48 L50.55 205.44 L50.68 206.72 L49.50 206.20 L48.32 206.72 L48.45 205.44 L47.60 204.48 L48.85 204.21Z"/>
  <path d="M372.10 203.10 L372.75 204.21 L374.00 204.48 L373.15 205.44 L373.28 206.72 L372.10 206.20 L370.92 206.72 L371.05 205.44 L370.20 204.48 L371.45 204.21Z"/>
  <path d="M49.80 309.30 L50.45 310.41 L51.70 310.68 L50.85 311.64 L50.98 312.92 L49.80 312.40 L48.62 312.92 L48.75 311.64 L47.90 310.68 L49.15 310.41Z"/>
  <path d="M49.70 394.70 L50.35 395.81 L51.60 396.08 L50.75 397.04 L50.88 398.32 L49.70 397.80 L48.52 398.32 L48.65 397.04 L47.80 396.08 L49.05 395.81Z"/>
  <path d="M49.60 439.10 L50.25 440.21 L51.50 440.48 L50.65 441.44 L50.78 442.72 L49.60 442.20 L48.42 442.72 L48.55 441.44 L47.70 440.48 L48.95 440.21Z"/>
  <path d="M49.60 483.10 L50.25 484.21 L51.50 484.48 L50.65 485.44 L50.78 486.72 L49.60 486.20 L48.42 486.72 L48.55 485.44 L47.70 484.48 L48.95 484.21Z"/>
  </g>
  <!-- dropdown triangles -->
  <g fill="#706e6b">
    <path d="M323.7 137.5 h8 l-4 5.5z"/>
    <path d="M642.7 137.5 h8 l-4 5.5z"/>
    <path d="M323.7 227.5 h8 l-4 5.5z"/>
    <path d="M642.7 315.5 h8 l-4 5.5z"/>
    <path d="M642.7 400.5 h8 l-4 5.5z"/>
    <path d="M642.7 445 h8 l-4 5.5z"/>
    <path d="M642.7 489.5 h8 l-4 5.5z"/>
  </g>
  <!-- campaign icon -->
  <rect x="372.4" y="220.7" width="16.3" height="16" rx="3" fill="#7f9bb6"/>
  <path d="M376 231.5 q-1.2 -1.8 0.6 -3.2 q0.6 -2.2 3 -1.8 q1.8 -1.4 3.6 0 q2.6 0.2 2.6 2.6 q0.2 2 -2 2.6 q-1.6 1.2 -3.2 0.4 q-2.2 0.6 -3.6 -0.2 q-0.6 0 -1 -0.4z" fill="#c9d7e3"/>
  <!-- X -->
  <path d="M639.6 226 L647.3 233.5 M647.3 226 L639.6 233.5" stroke="#555" stroke-width="1.3"/>
  <!-- info icons -->
  <defs><g id="inf">
    <circle cx="0" cy="0" r="5.35" fill="#6b6967"/>
    <rect x="-0.95" y="-2.65" width="1.9" height="1.5" fill="#fff"/>
    <rect x="-0.95" y="-0.55" width="1.9" height="3" fill="#fff"/>
  </g></defs>
  <use href="#inf" x="144.45" y="312.45"/>
  <use href="#inf" x="153.9" y="397.9"/>
  <use href="#inf" x="121.8" y="442.3"/>
  <use href="#inf" x="118.6" y="486.6"/>
</svg>

<div class="t" style="left:48.58px;top:23.83px;font-size:13.900px;color:#181818;font-weight:400;transform:scale(0.9498,0.9500);transform-origin:0 11.77px;">Payment Request Generator</div>
<div class="t" style="left:186.11px;top:57.52px;font-size:11.200px;color:#2a67b8;font-weight:400;transform:scale(0.9968,1.0000);transform-origin:0 9.48px;">New</div>
<div class="t" style="left:486.92px;top:58.32px;font-size:11.200px;color:#181818;font-weight:400;transform:scale(0.9826,1.0000);transform-origin:0 9.48px;">Generating</div>
<div class="t" style="left:816.13px;top:58.42px;font-size:11.200px;color:#181818;font-weight:400;transform:scale(0.9696,1.0000);transform-origin:0 9.48px;">Done</div>
<div class="t" style="left:45.86px;top:90.47px;font-size:10.000px;color:#4b4947;font-weight:400;letter-spacing:0.469px;-webkit-text-stroke:0.05px currentColor;transform:scale(0.9600,0.9000);transform-origin:0 8.46px;">1. SELECT PAYMENT REQUEST &amp; GENERATOR</div>
<div class="t" style="left:53.55px;top:112.76px;font-size:10.400px;color:#3e3e3c;font-weight:400;transform:scale(0.9343,0.9200);transform-origin:0 8.80px;">Payment Request Type</div>
<div class="t" style="left:56.19px;top:134.23px;font-size:11.300px;color:#181818;font-weight:400;transform:scale(0.9650,1.0000);transform-origin:0 9.57px;">Tikkie</div>
<div class="t" style="left:372.05px;top:112.76px;font-size:10.400px;color:#3e3e3c;font-weight:400;transform:scale(0.9428,0.9200);transform-origin:0 8.80px;">Generator Type</div>
<div class="t" style="left:375.24px;top:134.23px;font-size:11.300px;color:#181818;font-weight:400;transform:scale(1.0026,1.0000);transform-origin:0 9.57px;">Open Amount</div>
<div class="t" style="left:697.64px;top:114.07px;font-size:10.000px;color:#4b4947;font-weight:400;letter-spacing:0.522px;-webkit-text-stroke:0.05px currentColor;transform:scale(0.9600,0.9000);transform-origin:0 8.46px;">SOURCE DETAILS</div>
<div class="t" style="left:698.22px;top:132.56px;font-size:10.600px;color:#3e3e3c;font-weight:400;transform:scale(1.0401,1.0000);transform-origin:0 8.97px;">Campaign</div>
<div class="t" style="left:698.46px;top:147.86px;font-size:10.600px;color:#181818;font-weight:400;transform:scale(1.0118,1.0000);transform-origin:0 8.97px;">Aid4Everyone</div>
<div class="t" style="left:45.62px;top:180.07px;font-size:10.000px;color:#4b4947;font-weight:400;letter-spacing:0.420px;-webkit-text-stroke:0.05px currentColor;transform:scale(0.9600,0.9000);transform-origin:0 8.46px;">2. SELECT SOURCE</div>
<div class="t" style="left:53.53px;top:203.16px;font-size:10.400px;color:#3e3e3c;font-weight:400;transform:scale(0.9225,0.9200);transform-origin:0 8.80px;">Source Type</div>
<div class="t" style="left:56.07px;top:223.43px;font-size:11.300px;color:#181818;font-weight:400;transform:scale(0.9745,1.0000);transform-origin:0 9.57px;">Campaign</div>
<div class="t" style="left:375.53px;top:203.16px;font-size:10.400px;color:#3e3e3c;font-weight:400;transform:scale(0.9655,0.9200);transform-origin:0 8.80px;">Campaign</div>
<div class="t" style="left:398.16px;top:223.23px;font-size:11.300px;color:#181818;font-weight:400;transform:scale(0.9524,1.0000);transform-origin:0 9.57px;">Aid4Everyone</div>
<div class="t" style="left:45.01px;top:273.17px;font-size:10.000px;color:#4b4947;font-weight:400;letter-spacing:0.807px;-webkit-text-stroke:0.05px currentColor;transform:scale(0.9600,0.9000);transform-origin:0 8.46px;">3. SPECIFY INPUT MAPPING</div>
<div class="t" style="left:53.10px;top:308.26px;font-size:10.400px;color:#181818;font-weight:400;transform:scale(1.0548,0.9200);transform-origin:0 8.80px;">Description Field</div>
<div class="t" style="left:304.29px;top:312.23px;font-size:11.300px;color:#181818;font-weight:400;transform:scale(1.0020,1.0000);transform-origin:0 9.57px;">Description</div>
<div class="t" style="left:45.93px;top:358.47px;font-size:10.000px;color:#4b4947;font-weight:400;letter-spacing:0.727px;-webkit-text-stroke:0.05px currentColor;transform:scale(0.9600,0.9000);transform-origin:0 8.46px;">4. SPECIFY OUTPUT MAPPING</div>
<div class="t" style="left:53.30px;top:393.76px;font-size:10.400px;color:#181818;font-weight:400;transform:scale(1.0349,0.9200);transform-origin:0 8.80px;">Payment reference</div>
<div class="t" style="left:53.48px;top:438.16px;font-size:10.400px;color:#181818;font-weight:400;transform:scale(1.0351,0.9200);transform-origin:0 8.80px;">Payment Url</div>
<div class="t" style="left:53.36px;top:482.56px;font-size:10.400px;color:#181818;font-weight:400;transform:scale(0.9719,0.9200);transform-origin:0 8.80px;">QR Base 64</div>
<div class="t" style="left:316.29px;top:397.23px;font-size:11.300px;color:#706e6b;font-weight:400;transform:scale(0.9818,1.0000);transform-origin:0 9.57px;">Select an Option</div>
<div class="t" style="left:316.29px;top:440.63px;font-size:11.300px;color:#706e6b;font-weight:400;transform:scale(0.9818,1.0000);transform-origin:0 9.57px;">Select an Option</div>
<div class="t" style="left:316.29px;top:486.03px;font-size:11.300px;color:#706e6b;font-weight:400;transform:scale(0.9818,1.0000);transform-origin:0 9.57px;">Select an Option</div>
<div class="t" style="left:266.44px;top:531.22px;font-size:11.200px;color:#ffffff;font-weight:400;transform:scale(0.9006,1.0000);transform-origin:0 9.48px;">Save</div>
<div class="t" style="left:322.87px;top:531.42px;font-size:11.200px;color:#2c5ea3;font-weight:400;transform:scale(0.9458,1.0000);transform-origin:0 9.48px;">Save &amp; Start Generating</div>
</body></html>
